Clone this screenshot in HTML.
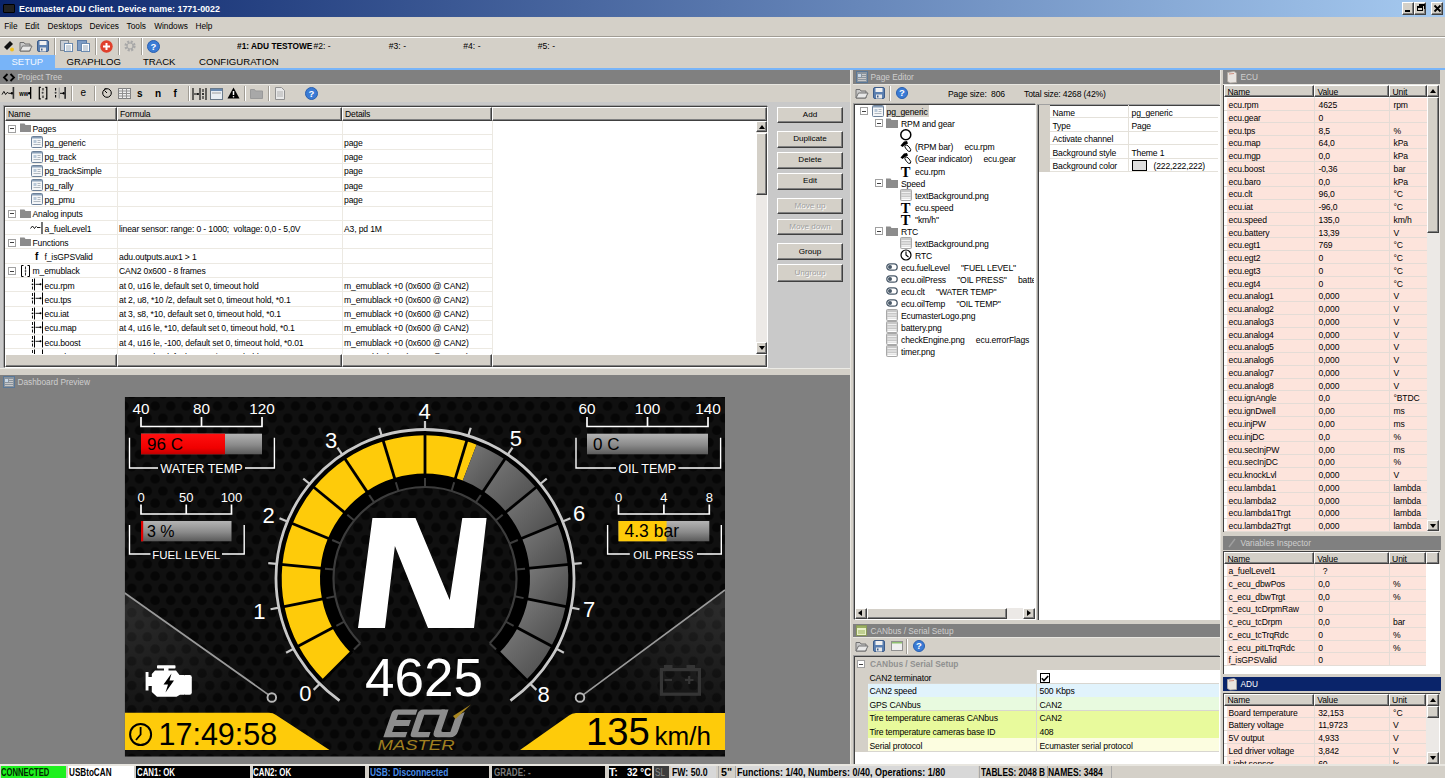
<!DOCTYPE html><html><head><meta charset="utf-8"><style>
html,body{margin:0;padding:0}body{width:1445px;height:778px;position:relative;overflow:hidden;background:#d4d0c8;font-family:"Liberation Sans",sans-serif;font-size:8.2px;color:#000}div{box-sizing:border-box}svg{position:absolute;overflow:visible}
</style></head><body>
<div style="position:absolute;left:0px;top:0px;width:1445px;height:17px;background:linear-gradient(to right,#0a246a 0%,#a6caf0 100%)"></div>
<div style="position:absolute;left:3px;top:4px;width:12px;height:9px;background:#222;border:1px solid #000;border-radius:1px"></div>
<div style="position:absolute;left:19px;top:3.0px;height:12px;line-height:12px;font-size:8.9px;color:#fff;font-weight:bold;white-space:pre;">Ecumaster ADU Client. Device name: 1771-0022</div>
<div style="position:absolute;left:1402px;top:2px;width:12px;height:13px;box-sizing:border-box;background:#d4d0c8;border-top:1px solid #fff;border-left:1px solid #fff;border-right:1px solid #404040;border-bottom:1px solid #404040;box-shadow:inset -1px -1px 0 #808080;"></div>
<div style="position:absolute;left:1414px;top:2px;width:12px;height:13px;box-sizing:border-box;background:#d4d0c8;border-top:1px solid #fff;border-left:1px solid #fff;border-right:1px solid #404040;border-bottom:1px solid #404040;box-shadow:inset -1px -1px 0 #808080;"></div>
<div style="position:absolute;left:1431px;top:2px;width:12px;height:13px;box-sizing:border-box;background:#d4d0c8;border-top:1px solid #fff;border-left:1px solid #fff;border-right:1px solid #404040;border-bottom:1px solid #404040;box-shadow:inset -1px -1px 0 #808080;"></div>
<div style="position:absolute;left:1405px;top:10px;width:5px;height:2px;background:#000"></div>
<div style="position:absolute;left:1417px;top:6px;width:6px;height:5px;border:1px solid #000;border-top-width:2px"></div>
<div style="position:absolute;left:1419px;top:4px;width:6px;height:5px;border:1px solid #000;border-top-width:2px;border-left:none;border-bottom:none"></div>
<svg style="left:1434px;top:5px" width="7" height="7"><path d="M0.5 0.5L6.5 6.5M6.5 0.5L0.5 6.5" stroke="#000" stroke-width="1.8"/></svg>
<div style="position:absolute;left:4.2px;top:20.3px;height:12px;line-height:12px;font-size:8.3px;color:#000;font-weight:normal;white-space:pre;">File</div>
<div style="position:absolute;left:24.9px;top:20.3px;height:12px;line-height:12px;font-size:8.3px;color:#000;font-weight:normal;white-space:pre;">Edit</div>
<div style="position:absolute;left:47.6px;top:20.3px;height:12px;line-height:12px;font-size:8.3px;color:#000;font-weight:normal;white-space:pre;">Desktops</div>
<div style="position:absolute;left:89.4px;top:20.3px;height:12px;line-height:12px;font-size:8.3px;color:#000;font-weight:normal;white-space:pre;">Devices</div>
<div style="position:absolute;left:126.5px;top:20.3px;height:12px;line-height:12px;font-size:8.3px;color:#000;font-weight:normal;white-space:pre;">Tools</div>
<div style="position:absolute;left:154.2px;top:20.3px;height:12px;line-height:12px;font-size:8.3px;color:#000;font-weight:normal;white-space:pre;">Windows</div>
<div style="position:absolute;left:195.4px;top:20.3px;height:12px;line-height:12px;font-size:8.3px;color:#000;font-weight:normal;white-space:pre;">Help</div>
<div style="position:absolute;left:0px;top:36px;width:1445px;height:1px;background:#a09c94"></div>
<div style="position:absolute;left:0px;top:37px;width:1445px;height:1px;background:#fff"></div>
<svg style="left:3px;top:40px" width="12" height="12"><path d="M1 7l6-6 3 3-6 6z" fill="#111"/><circle cx="9" cy="9.5" r="2" fill="#f0c020"/></svg>
<svg style="left:19px;top:40px" width="13" height="12"><path d="M1 2.5h4l1 1.5h5v7H1z" fill="#c8c8c8" stroke="#707070" stroke-width="1"/><path d="M1 11l2.5-5h9.5l-2.5 5z" fill="#e8e8e8" stroke="#707070" stroke-width="1"/></svg>
<svg style="left:37px;top:40px" width="12" height="12"><rect x="0.5" y="0.5" width="11" height="11" rx="1.5" fill="#5a7fb0" stroke="#3d5c8a"/><rect x="2.5" y="1" width="7" height="4" fill="#f0f0f0"/><rect x="3" y="7.5" width="6" height="4" fill="#e8e8e8"/><rect x="4" y="8.5" width="1.5" height="2" fill="#3d5c8a"/></svg>
<div style="position:absolute;left:54px;top:38px;width:2px;height:17px;border-left:1px solid #a09c94;border-right:1px solid #fff"></div>
<svg style="left:60px;top:40px" width="13" height="12"><rect x="0.5" y="0.5" width="8" height="10" fill="#c8cdd4" stroke="#808890"/><rect x="4.5" y="3.5" width="8" height="8" fill="#fff" stroke="#6a8ab0"/><path d="M6 6h5M6 8h5M6 10h5" stroke="#9ab"/></svg>
<svg style="left:77px;top:40px" width="13" height="12"><rect x="0.5" y="0.5" width="9" height="10" fill="#7d9cc4" stroke="#5a7aa4"/><rect x="4.5" y="3.5" width="8" height="8" fill="#fff" stroke="#6a8ab0"/><path d="M6 6h5M6 8h5M6 10h5" stroke="#9ab"/></svg>
<div style="position:absolute;left:95px;top:38px;width:2px;height:17px;border-left:1px solid #a09c94;border-right:1px solid #fff"></div>
<svg style="left:100px;top:40px" width="13" height="13"><circle cx="6.5" cy="6.5" r="6.2" fill="#e0402c"/><path d="M6.5 3v7M3 6.5h7" stroke="#fff" stroke-width="2"/></svg>
<div style="position:absolute;left:118px;top:38px;width:2px;height:17px;border-left:1px solid #a09c94;border-right:1px solid #fff"></div>
<svg style="left:124px;top:40px" width="12" height="12"><circle cx="6" cy="6" r="4.3" fill="none" stroke="#a8a8a8" stroke-width="2.6" stroke-dasharray="2 1.4"/><circle cx="6" cy="6" r="3" fill="none" stroke="#a8a8a8" stroke-width="1.2"/></svg>
<div style="position:absolute;left:141px;top:38px;width:2px;height:17px;border-left:1px solid #a09c94;border-right:1px solid #fff"></div>
<svg style="left:147px;top:40px" width="13" height="13"><circle cx="6.5" cy="6.5" r="6.0" fill="#3a7bd5" stroke="#2a5fae"/><text x="6.5" y="9.8" font-family="Liberation Sans" font-weight="bold" font-size="9.5" fill="#fff" text-anchor="middle">?</text></svg>
<div style="position:absolute;left:237.38px;top:39.10px;height:14px;line-height:14px;font-size:8.78px;color:#000;font-weight:bold;white-space:pre;transform:scaleX(0.950);transform-origin:0 50%;">#1: ADU TESTOWE</div>
<div style="position:absolute;left:313.4px;top:39.5px;height:12px;line-height:12px;font-size:8.6px;color:#000;font-weight:normal;white-space:pre;">#2: -</div>
<div style="position:absolute;left:388.8px;top:39.5px;height:12px;line-height:12px;font-size:8.6px;color:#000;font-weight:normal;white-space:pre;">#3: -</div>
<div style="position:absolute;left:463.3px;top:39.5px;height:12px;line-height:12px;font-size:8.6px;color:#000;font-weight:normal;white-space:pre;">#4: -</div>
<div style="position:absolute;left:537.8px;top:39.5px;height:12px;line-height:12px;font-size:8.6px;color:#000;font-weight:normal;white-space:pre;">#5: -</div>
<div style="position:absolute;left:0px;top:55px;width:55px;height:13px;background:#78b4f8"></div>
<div style="position:absolute;left:11.5px;top:55.7px;height:12px;line-height:12px;font-size:9.5px;color:#f4f8ff;font-weight:normal;white-space:pre;">SETUP</div>
<div style="position:absolute;left:66.5px;top:55.7px;height:12px;line-height:12px;font-size:9.6px;color:#000;font-weight:normal;white-space:pre;">GRAPHLOG</div>
<div style="position:absolute;left:143px;top:55.7px;height:12px;line-height:12px;font-size:9.6px;color:#000;font-weight:normal;white-space:pre;">TRACK</div>
<div style="position:absolute;left:199px;top:55.7px;height:12px;line-height:12px;font-size:9.6px;color:#000;font-weight:normal;white-space:pre;">CONFIGURATION</div>
<div style="position:absolute;left:0px;top:68px;width:1445px;height:2px;background:#78b4f8"></div>
<div style="position:absolute;left:0px;top:70px;width:850px;height:14px;background:#808080"></div><svg style="left:3px;top:73px" width="12" height="9"><path d="M4.5 1L1 4.5L4.5 8M7.5 1L11 4.5L7.5 8" fill="none" stroke="#000" stroke-width="1.8"/></svg><div style="position:absolute;left:17.5px;top:71.3px;height:12px;line-height:12px;font-size:8.3px;color:#cfcfcf;font-weight:normal;white-space:pre;">Project Tree</div>
<div style="position:absolute;left:0px;top:84px;width:850px;height:1px;background:#e8e6e0"></div>
<svg style="left:0;top:84px" width="70" height="20" viewBox="0 84 70 20"><path d="M2 94.6L3.9 91.4L5.6 94.5L7.2 92.4L8.8 93.3H11.5" fill="none" stroke="#000" stroke-width="0.9"/><circle cx="12" cy="93.3" r="1.2" fill="#000"/><rect x="12.6" y="87" width="1.6" height="11.8" fill="#333"/><text x="19.3" y="95.6" font-family="Liberation Sans" font-weight="bold" font-size="7.5" fill="#000" textLength="8.8" lengthAdjust="spacingAndGlyphs">ww</text><circle cx="29.3" cy="93.3" r="1.2" fill="#000"/><rect x="30" y="87" width="1.3" height="11.8" fill="#000"/><path d="M40.8 87.3H39.3V98.8H40.8M45.3 87.3H46.8V98.8H45.3" fill="none" stroke="#000" stroke-width="1.2"/><path d="M43 88V90.5M43 95.5V98" stroke="#000" stroke-width="1"/><circle cx="42.6" cy="92.8" r="1" fill="#404040"/><path d="M55.6 88V90.5M55.6 95V97.5" stroke="#000" stroke-width="1.1"/><circle cx="55.6" cy="92.8" r="1" fill="#404040"/><rect x="58.7" y="87.5" width="1" height="11" fill="#909090"/><path d="M60 93.3H63.5" stroke="#000" stroke-width="1"/><circle cx="63.8" cy="93.3" r="1.2" fill="#000"/><rect x="64.3" y="87" width="1.7" height="11.8" fill="#333"/></svg><div style="position:absolute;left:71px;top:86px;width:2px;height:15px;border-left:1px solid #a09c94;border-right:1px solid #fff"></div><div style="position:absolute;left:80.5px;top:87.0px;height:12px;line-height:12px;font-size:10px;color:#000;font-weight:normal;white-space:pre;">e</div><div style="position:absolute;left:94px;top:86px;width:2px;height:15px;border-left:1px solid #a09c94;border-right:1px solid #fff"></div><svg style="left:102px;top:88px" width="10" height="10"><circle cx="5" cy="5" r="4.3" fill="none" stroke="#000" stroke-width="1"/><path d="M5 5L2.5 2.5M2.5 0.8L4.5 0.8" stroke="#000" stroke-width="1"/></svg><svg style="left:118px;top:88px" width="13" height="11"><rect x="0.5" y="0.5" width="12" height="10" fill="#f0f0f0" stroke="#808080"/><path d="M0.5 3h12M0.5 5.5h12M0.5 8h12M4.5 0.5v10M8.5 0.5v10" stroke="#909090"/></svg><div style="position:absolute;left:137px;top:88.0px;height:12px;line-height:12px;font-size:10px;color:#000;font-weight:bold;white-space:pre;">s</div><div style="position:absolute;left:155px;top:88.0px;height:12px;line-height:12px;font-size:10px;color:#000;font-weight:bold;white-space:pre;">n</div><div style="position:absolute;left:173.5px;top:87.5px;height:12px;line-height:12px;font-size:10px;color:#000;font-weight:bold;white-space:pre;">f</div><div style="position:absolute;left:188px;top:86px;width:2px;height:15px;border-left:1px solid #a09c94;border-right:1px solid #fff"></div><svg style="left:192px;top:88px" width="16" height="12"><path d="M1 0v12" stroke="#000" stroke-width="1.1"/><path d="M2 6h4" stroke="#000"/><circle cx="6" cy="6" r="1" fill="#000"/><path d="M8 0v12" stroke="#000" stroke-width="1.1"/><path d="M11 1v3M11 8v3" stroke="#000"/><circle cx="11" cy="6" r="1" fill="#000"/><path d="M14 0v12" stroke="#000" stroke-width="1.1"/></svg><svg style="left:210px;top:88px" width="13" height="12"><rect x="0.5" y="0.5" width="12" height="11" fill="#e8eef4" stroke="#6a7a8a"/><rect x="1" y="1" width="11" height="2" fill="#6a8ab0"/><path d="M2 5h9" stroke="#a0a0a0"/></svg><svg style="left:227px;top:87px" width="13" height="12"><path d="M6.5 0.5L12.5 11.5H0.5z" fill="#000"/><path d="M6.5 4v4" stroke="#fff" stroke-width="1.5"/><circle cx="6.5" cy="9.7" r="0.8" fill="#fff"/></svg><div style="position:absolute;left:244px;top:86px;width:2px;height:15px;border-left:1px solid #a09c94;border-right:1px solid #fff"></div><svg style="left:250px;top:88px" width="13" height="11"><path d="M0.5 1.5h4l1 1.5h7v7.5h-12z" fill="#a8a8a8" stroke="#999"/></svg><div style="position:absolute;left:268px;top:86px;width:2px;height:15px;border-left:1px solid #a09c94;border-right:1px solid #fff"></div><svg style="left:275px;top:87px" width="10" height="13"><path d="M0.5 0.5h6l3 3v9h-9z" fill="#e8e8e8" stroke="#909090"/><path d="M2 5h6M2 7h6M2 9h6" stroke="#b0b0b0"/></svg><svg style="left:305px;top:87px" width="13" height="13"><circle cx="6.5" cy="6.5" r="6.0" fill="#3a7bd5" stroke="#2a5fae"/><text x="6.5" y="9.8" font-family="Liberation Sans" font-weight="bold" font-size="9.5" fill="#fff" text-anchor="middle">?</text></svg>
<div style="position:absolute;left:0px;top:102px;width:850px;height:273px;background:#c9c9c9"></div>
<div style="position:absolute;left:4px;top:106px;width:764px;height:262px;background:#fff;border-top:1px solid #404040;border-left:1px solid #404040;border-right:1px solid #fff;border-bottom:1px solid #fff;box-shadow:-1px -1px 0 #a0a0a0"></div>
<div style="position:absolute;left:5px;top:107px;width:112px;height:14px;box-sizing:border-box;background:#d4d0c8;border-top:1px solid #fff;border-left:1px solid #fff;border-right:1px solid #404040;border-bottom:1px solid #404040;box-shadow:inset -1px -1px 0 #808080;"></div>
<div style="position:absolute;left:117px;top:107px;width:225px;height:14px;box-sizing:border-box;background:#d4d0c8;border-top:1px solid #fff;border-left:1px solid #fff;border-right:1px solid #404040;border-bottom:1px solid #404040;box-shadow:inset -1px -1px 0 #808080;"></div>
<div style="position:absolute;left:342px;top:107px;width:150px;height:14px;box-sizing:border-box;background:#d4d0c8;border-top:1px solid #fff;border-left:1px solid #fff;border-right:1px solid #404040;border-bottom:1px solid #404040;box-shadow:inset -1px -1px 0 #808080;"></div>
<div style="position:absolute;left:492px;top:107px;width:275px;height:14px;box-sizing:border-box;background:#d4d0c8;border-top:1px solid #fff;border-left:1px solid #fff;border-right:1px solid #404040;border-bottom:1px solid #404040;box-shadow:inset -1px -1px 0 #808080;"></div>
<div style="position:absolute;left:8px;top:108.0px;height:12px;line-height:12px;font-size:8.6px;color:#000;font-weight:normal;white-space:pre;letter-spacing:-0.15px;">Name</div>
<div style="position:absolute;left:120px;top:108.0px;height:12px;line-height:12px;font-size:8.6px;color:#000;font-weight:normal;white-space:pre;letter-spacing:-0.15px;">Formula</div>
<div style="position:absolute;left:345px;top:108.0px;height:12px;line-height:12px;font-size:8.6px;color:#000;font-weight:normal;white-space:pre;letter-spacing:-0.15px;">Details</div>
<div style="position:absolute;left:5px;top:354px;width:112px;height:13px;box-sizing:border-box;background:#d4d0c8;border-top:1px solid #fff;border-left:1px solid #fff;border-right:1px solid #404040;border-bottom:1px solid #404040;box-shadow:inset -1px -1px 0 #808080;"></div>
<div style="position:absolute;left:117px;top:354px;width:225px;height:13px;box-sizing:border-box;background:#d4d0c8;border-top:1px solid #fff;border-left:1px solid #fff;border-right:1px solid #404040;border-bottom:1px solid #404040;box-shadow:inset -1px -1px 0 #808080;"></div>
<div style="position:absolute;left:342px;top:354px;width:150px;height:13px;box-sizing:border-box;background:#d4d0c8;border-top:1px solid #fff;border-left:1px solid #fff;border-right:1px solid #404040;border-bottom:1px solid #404040;box-shadow:inset -1px -1px 0 #808080;"></div>
<div style="position:absolute;left:492px;top:354px;width:275px;height:13px;box-sizing:border-box;background:#d4d0c8;border-top:1px solid #fff;border-left:1px solid #fff;border-right:1px solid #404040;border-bottom:1px solid #404040;box-shadow:inset -1px -1px 0 #808080;"></div>
<div style="position:absolute;left:0;top:0;width:1445px;height:354px;overflow:hidden;clip-path:inset(121px 0 0 0)"><div style="position:absolute;left:5px;top:134.27px;width:487px;height:1px;background:#ece9e2"></div><div style="position:absolute;left:8px;top:124.63499999999999px;width:8px;height:8px;border:1px solid #a0a0a0;background:#fff"></div><div style="position:absolute;left:10px;top:127.835px;width:4px;height:1px;background:#404040"></div><svg style="left:20px;top:123.13499999999999px" width="11" height="9"><path d="M0 0.5h4.5l1 1.5H11v7H0z" fill="#8c8c8c"/></svg><div style="position:absolute;left:32.5px;top:122.63499999999999px;height:12px;line-height:12px;font-size:8.6px;color:#000;font-weight:normal;white-space:pre;letter-spacing:-0.15px;">Pages</div><div style="position:absolute;left:5px;top:148.54000000000002px;width:487px;height:1px;background:#ece9e2"></div><svg style="left:31px;top:136.405px" width="12" height="12"><rect x="0.5" y="0.5" width="11" height="11" rx="1" fill="#f4f6f8" stroke="#6c8098"/><rect x="1" y="1" width="10" height="1.5" fill="#8aa0b8"/><rect x="2.5" y="4" width="3" height="3" fill="#b8c8d8"/><path d="M6.5 4.5h3M6.5 6.5h3M2.5 8.5h7" stroke="#b0b8c0"/></svg><div style="position:absolute;left:44.5px;top:136.905px;height:12px;line-height:12px;font-size:8.6px;color:#000;font-weight:normal;white-space:pre;letter-spacing:-0.15px;">pg_generic</div><div style="position:absolute;left:344px;top:136.905px;height:12px;line-height:12px;font-size:8.6px;color:#000;font-weight:normal;white-space:pre;letter-spacing:-0.15px;">page</div><div style="position:absolute;left:5px;top:162.81px;width:487px;height:1px;background:#ece9e2"></div><svg style="left:31px;top:150.67499999999998px" width="12" height="12"><rect x="0.5" y="0.5" width="11" height="11" rx="1" fill="#f4f6f8" stroke="#6c8098"/><rect x="1" y="1" width="10" height="1.5" fill="#8aa0b8"/><rect x="2.5" y="4" width="3" height="3" fill="#b8c8d8"/><path d="M6.5 4.5h3M6.5 6.5h3M2.5 8.5h7" stroke="#b0b8c0"/></svg><div style="position:absolute;left:44.5px;top:151.17499999999998px;height:12px;line-height:12px;font-size:8.6px;color:#000;font-weight:normal;white-space:pre;letter-spacing:-0.15px;">pg_track</div><div style="position:absolute;left:344px;top:151.17499999999998px;height:12px;line-height:12px;font-size:8.6px;color:#000;font-weight:normal;white-space:pre;letter-spacing:-0.15px;">page</div><div style="position:absolute;left:5px;top:177.08px;width:487px;height:1px;background:#ece9e2"></div><svg style="left:31px;top:164.945px" width="12" height="12"><rect x="0.5" y="0.5" width="11" height="11" rx="1" fill="#f4f6f8" stroke="#6c8098"/><rect x="1" y="1" width="10" height="1.5" fill="#8aa0b8"/><rect x="2.5" y="4" width="3" height="3" fill="#b8c8d8"/><path d="M6.5 4.5h3M6.5 6.5h3M2.5 8.5h7" stroke="#b0b8c0"/></svg><div style="position:absolute;left:44.5px;top:165.445px;height:12px;line-height:12px;font-size:8.6px;color:#000;font-weight:normal;white-space:pre;letter-spacing:-0.15px;">pg_trackSimple</div><div style="position:absolute;left:344px;top:165.445px;height:12px;line-height:12px;font-size:8.6px;color:#000;font-weight:normal;white-space:pre;letter-spacing:-0.15px;">page</div><div style="position:absolute;left:5px;top:191.35px;width:487px;height:1px;background:#ece9e2"></div><svg style="left:31px;top:179.21499999999997px" width="12" height="12"><rect x="0.5" y="0.5" width="11" height="11" rx="1" fill="#f4f6f8" stroke="#6c8098"/><rect x="1" y="1" width="10" height="1.5" fill="#8aa0b8"/><rect x="2.5" y="4" width="3" height="3" fill="#b8c8d8"/><path d="M6.5 4.5h3M6.5 6.5h3M2.5 8.5h7" stroke="#b0b8c0"/></svg><div style="position:absolute;left:44.5px;top:179.71499999999997px;height:12px;line-height:12px;font-size:8.6px;color:#000;font-weight:normal;white-space:pre;letter-spacing:-0.15px;">pg_rally</div><div style="position:absolute;left:344px;top:179.71499999999997px;height:12px;line-height:12px;font-size:8.6px;color:#000;font-weight:normal;white-space:pre;letter-spacing:-0.15px;">page</div><div style="position:absolute;left:5px;top:205.62px;width:487px;height:1px;background:#ece9e2"></div><svg style="left:31px;top:193.48499999999999px" width="12" height="12"><rect x="0.5" y="0.5" width="11" height="11" rx="1" fill="#f4f6f8" stroke="#6c8098"/><rect x="1" y="1" width="10" height="1.5" fill="#8aa0b8"/><rect x="2.5" y="4" width="3" height="3" fill="#b8c8d8"/><path d="M6.5 4.5h3M6.5 6.5h3M2.5 8.5h7" stroke="#b0b8c0"/></svg><div style="position:absolute;left:44.5px;top:193.98499999999999px;height:12px;line-height:12px;font-size:8.6px;color:#000;font-weight:normal;white-space:pre;letter-spacing:-0.15px;">pg_pmu</div><div style="position:absolute;left:344px;top:193.98499999999999px;height:12px;line-height:12px;font-size:8.6px;color:#000;font-weight:normal;white-space:pre;letter-spacing:-0.15px;">page</div><div style="position:absolute;left:5px;top:219.89000000000001px;width:487px;height:1px;background:#ece9e2"></div><div style="position:absolute;left:8px;top:210.255px;width:8px;height:8px;border:1px solid #a0a0a0;background:#fff"></div><div style="position:absolute;left:10px;top:213.45499999999998px;width:4px;height:1px;background:#404040"></div><svg style="left:20px;top:208.755px" width="11" height="9"><path d="M0 0.5h4.5l1 1.5H11v7H0z" fill="#8c8c8c"/></svg><div style="position:absolute;left:32.5px;top:208.255px;height:12px;line-height:12px;font-size:8.6px;color:#000;font-weight:normal;white-space:pre;letter-spacing:-0.15px;">Analog inputs</div><div style="position:absolute;left:5px;top:234.16px;width:487px;height:1px;background:#ece9e2"></div><svg style="left:30px;top:222.02499999999998px" width="13" height="12"><path d="M0.5 6.5l2-2.5 2 2.5 2-2.5" fill="none" stroke="#000" stroke-width="0.9"/><path d="M7 5.5h3.5" stroke="#000" stroke-width="0.9"/><path d="M12 0v12" stroke="#000" stroke-width="1.1"/></svg><div style="position:absolute;left:44.5px;top:222.52499999999998px;height:12px;line-height:12px;font-size:8.6px;color:#000;font-weight:normal;white-space:pre;letter-spacing:-0.15px;">a_fuelLevel1</div><div style="position:absolute;left:119px;top:222.52499999999998px;height:12px;line-height:12px;font-size:8.6px;color:#000;font-weight:normal;white-space:pre;letter-spacing:-0.15px;">linear sensor: range: 0 - 1000;  voltage: 0,0 - 5,0V</div><div style="position:absolute;left:344px;top:222.52499999999998px;height:12px;line-height:12px;font-size:8.6px;color:#000;font-weight:normal;white-space:pre;letter-spacing:-0.15px;">A3, pd 1M</div><div style="position:absolute;left:5px;top:248.43px;width:487px;height:1px;background:#ece9e2"></div><div style="position:absolute;left:8px;top:238.795px;width:8px;height:8px;border:1px solid #a0a0a0;background:#fff"></div><div style="position:absolute;left:10px;top:241.99499999999998px;width:4px;height:1px;background:#404040"></div><svg style="left:20px;top:237.295px" width="11" height="9"><path d="M0 0.5h4.5l1 1.5H11v7H0z" fill="#8c8c8c"/></svg><div style="position:absolute;left:32.5px;top:236.795px;height:12px;line-height:12px;font-size:8.6px;color:#000;font-weight:normal;white-space:pre;letter-spacing:-0.15px;">Functions</div><div style="position:absolute;left:5px;top:262.7px;width:487px;height:1px;background:#ece9e2"></div><div style="position:absolute;left:35px;top:250.565px;height:12px;line-height:12px;font-size:10px;color:#000;font-weight:bold;white-space:pre;">f</div><div style="position:absolute;left:44.5px;top:251.065px;height:12px;line-height:12px;font-size:8.6px;color:#000;font-weight:normal;white-space:pre;letter-spacing:-0.15px;">f_isGPSValid</div><div style="position:absolute;left:119px;top:251.065px;height:12px;line-height:12px;font-size:8.6px;color:#000;font-weight:normal;white-space:pre;letter-spacing:-0.15px;">adu.outputs.aux1 &gt; 1</div><div style="position:absolute;left:5px;top:276.96999999999997px;width:487px;height:1px;background:#ece9e2"></div><div style="position:absolute;left:8px;top:267.335px;width:8px;height:8px;border:1px solid #a0a0a0;background:#fff"></div><div style="position:absolute;left:10px;top:270.53499999999997px;width:4px;height:1px;background:#404040"></div><svg style="left:21px;top:264.835px" width="9" height="12"><path d="M2.5 0.5h-2v11h2M6.5 0.5h2v11h-2" fill="none" stroke="#000" stroke-width="1"/><path d="M4.5 1.5v3M4.5 7.5v3" stroke="#000" stroke-width="0.8"/><circle cx="4.5" cy="6" r="0.8" fill="#000"/></svg><div style="position:absolute;left:32.5px;top:265.335px;height:12px;line-height:12px;font-size:8.6px;color:#000;font-weight:normal;white-space:pre;letter-spacing:-0.15px;">m_emublack</div><div style="position:absolute;left:119px;top:265.335px;height:12px;line-height:12px;font-size:8.6px;color:#000;font-weight:normal;white-space:pre;letter-spacing:-0.15px;">CAN2 0x600 - 8 frames</div><div style="position:absolute;left:5px;top:291.24px;width:487px;height:1px;background:#ece9e2"></div><svg style="left:31px;top:278.105px" width="12" height="13"><path d="M1.5 1v3M1.5 8.5v3" stroke="#000" stroke-width="0.9"/><circle cx="1.5" cy="6.3" r="0.9" fill="#000"/><path d="M3.5 0.5v12M11.5 0.5v12" stroke="#000" stroke-width="1"/><path d="M4.5 6.3h5" stroke="#000" stroke-width="0.9"/><circle cx="9.5" cy="6.3" r="1" fill="#000"/></svg><div style="position:absolute;left:44.5px;top:279.605px;height:12px;line-height:12px;font-size:8.6px;color:#000;font-weight:normal;white-space:pre;letter-spacing:-0.15px;">ecu.rpm</div><div style="position:absolute;left:119px;top:279.605px;height:12px;line-height:12px;font-size:8.6px;color:#000;font-weight:normal;white-space:pre;letter-spacing:-0.15px;">at 0, u16 le, default set 0, timeout hold</div><div style="position:absolute;left:344px;top:279.605px;height:12px;line-height:12px;font-size:8.6px;color:#000;font-weight:normal;white-space:pre;letter-spacing:-0.15px;">m_emublack +0 (0x600 @ CAN2)</div><div style="position:absolute;left:5px;top:305.51px;width:487px;height:1px;background:#ece9e2"></div><svg style="left:31px;top:292.375px" width="12" height="13"><path d="M1.5 1v3M1.5 8.5v3" stroke="#000" stroke-width="0.9"/><circle cx="1.5" cy="6.3" r="0.9" fill="#000"/><path d="M3.5 0.5v12M11.5 0.5v12" stroke="#000" stroke-width="1"/><path d="M4.5 6.3h5" stroke="#000" stroke-width="0.9"/><circle cx="9.5" cy="6.3" r="1" fill="#000"/></svg><div style="position:absolute;left:44.5px;top:293.875px;height:12px;line-height:12px;font-size:8.6px;color:#000;font-weight:normal;white-space:pre;letter-spacing:-0.15px;">ecu.tps</div><div style="position:absolute;left:119px;top:293.875px;height:12px;line-height:12px;font-size:8.6px;color:#000;font-weight:normal;white-space:pre;letter-spacing:-0.15px;">at 2, u8, *10 /2, default set 0, timeout hold, *0.1</div><div style="position:absolute;left:344px;top:293.875px;height:12px;line-height:12px;font-size:8.6px;color:#000;font-weight:normal;white-space:pre;letter-spacing:-0.15px;">m_emublack +0 (0x600 @ CAN2)</div><div style="position:absolute;left:5px;top:319.78px;width:487px;height:1px;background:#ece9e2"></div><svg style="left:31px;top:306.645px" width="12" height="13"><path d="M1.5 1v3M1.5 8.5v3" stroke="#000" stroke-width="0.9"/><circle cx="1.5" cy="6.3" r="0.9" fill="#000"/><path d="M3.5 0.5v12M11.5 0.5v12" stroke="#000" stroke-width="1"/><path d="M4.5 6.3h5" stroke="#000" stroke-width="0.9"/><circle cx="9.5" cy="6.3" r="1" fill="#000"/></svg><div style="position:absolute;left:44.5px;top:308.145px;height:12px;line-height:12px;font-size:8.6px;color:#000;font-weight:normal;white-space:pre;letter-spacing:-0.15px;">ecu.iat</div><div style="position:absolute;left:119px;top:308.145px;height:12px;line-height:12px;font-size:8.6px;color:#000;font-weight:normal;white-space:pre;letter-spacing:-0.15px;">at 3, s8, *10, default set 0, timeout hold, *0.1</div><div style="position:absolute;left:344px;top:308.145px;height:12px;line-height:12px;font-size:8.6px;color:#000;font-weight:normal;white-space:pre;letter-spacing:-0.15px;">m_emublack +0 (0x600 @ CAN2)</div><div style="position:absolute;left:5px;top:334.04999999999995px;width:487px;height:1px;background:#ece9e2"></div><svg style="left:31px;top:320.91499999999996px" width="12" height="13"><path d="M1.5 1v3M1.5 8.5v3" stroke="#000" stroke-width="0.9"/><circle cx="1.5" cy="6.3" r="0.9" fill="#000"/><path d="M3.5 0.5v12M11.5 0.5v12" stroke="#000" stroke-width="1"/><path d="M4.5 6.3h5" stroke="#000" stroke-width="0.9"/><circle cx="9.5" cy="6.3" r="1" fill="#000"/></svg><div style="position:absolute;left:44.5px;top:322.41499999999996px;height:12px;line-height:12px;font-size:8.6px;color:#000;font-weight:normal;white-space:pre;letter-spacing:-0.15px;">ecu.map</div><div style="position:absolute;left:119px;top:322.41499999999996px;height:12px;line-height:12px;font-size:8.6px;color:#000;font-weight:normal;white-space:pre;letter-spacing:-0.15px;">at 4, u16 le, *10, default set 0, timeout hold, *0.1</div><div style="position:absolute;left:344px;top:322.41499999999996px;height:12px;line-height:12px;font-size:8.6px;color:#000;font-weight:normal;white-space:pre;letter-spacing:-0.15px;">m_emublack +0 (0x600 @ CAN2)</div><div style="position:absolute;left:5px;top:348.31999999999994px;width:487px;height:1px;background:#ece9e2"></div><svg style="left:31px;top:335.18499999999995px" width="12" height="13"><path d="M1.5 1v3M1.5 8.5v3" stroke="#000" stroke-width="0.9"/><circle cx="1.5" cy="6.3" r="0.9" fill="#000"/><path d="M3.5 0.5v12M11.5 0.5v12" stroke="#000" stroke-width="1"/><path d="M4.5 6.3h5" stroke="#000" stroke-width="0.9"/><circle cx="9.5" cy="6.3" r="1" fill="#000"/></svg><div style="position:absolute;left:44.5px;top:336.68499999999995px;height:12px;line-height:12px;font-size:8.6px;color:#000;font-weight:normal;white-space:pre;letter-spacing:-0.15px;">ecu.boost</div><div style="position:absolute;left:119px;top:336.68499999999995px;height:12px;line-height:12px;font-size:8.6px;color:#000;font-weight:normal;white-space:pre;letter-spacing:-0.15px;">at 4, u16 le, -100, default set 0, timeout hold, *0.01</div><div style="position:absolute;left:344px;top:336.68499999999995px;height:12px;line-height:12px;font-size:8.6px;color:#000;font-weight:normal;white-space:pre;letter-spacing:-0.15px;">m_emublack +0 (0x600 @ CAN2)</div><div style="position:absolute;left:5px;top:362.59px;width:487px;height:1px;background:#ece9e2"></div><svg style="left:31px;top:349.455px" width="12" height="13"><path d="M1.5 1v3M1.5 8.5v3" stroke="#000" stroke-width="0.9"/><circle cx="1.5" cy="6.3" r="0.9" fill="#000"/><path d="M3.5 0.5v12M11.5 0.5v12" stroke="#000" stroke-width="1"/><path d="M4.5 6.3h5" stroke="#000" stroke-width="0.9"/><circle cx="9.5" cy="6.3" r="1" fill="#000"/></svg><div style="position:absolute;left:44.5px;top:350.955px;height:12px;line-height:12px;font-size:8.6px;color:#000;font-weight:normal;white-space:pre;letter-spacing:-0.15px;">ecu.clt</div><div style="position:absolute;left:119px;top:350.955px;height:12px;line-height:12px;font-size:8.6px;color:#000;font-weight:normal;white-space:pre;letter-spacing:-0.15px;">at 6, u16 le, default set 0, timeout hold</div><div style="position:absolute;left:344px;top:350.955px;height:12px;line-height:12px;font-size:8.6px;color:#000;font-weight:normal;white-space:pre;letter-spacing:-0.15px;">m_emublack +0 (0x600 @ CAN2)</div></div>
<div style="position:absolute;left:117px;top:121px;width:1px;height:233px;background:#ece9e2"></div>
<div style="position:absolute;left:342px;top:121px;width:1px;height:233px;background:#ece9e2"></div>
<div style="position:absolute;left:492px;top:121px;width:1px;height:233px;background:#ece9e2"></div>
<div style="position:absolute;left:756px;top:121px;width:11px;height:233px;background:#ece9e6"></div>
<div style="position:absolute;left:756px;top:121px;width:11px;height:11px;box-sizing:border-box;background:#d4d0c8;border-top:1px solid #fff;border-left:1px solid #fff;border-right:1px solid #404040;border-bottom:1px solid #404040;box-shadow:inset -1px -1px 0 #808080;"></div>
<svg style="left:758.5px;top:124.5px" width="6" height="4"><path d="M3 0L6 4H0z" fill="#000"/></svg>
<div style="position:absolute;left:756px;top:133px;width:11px;height:62px;box-sizing:border-box;background:#d4d0c8;border-top:1px solid #fff;border-left:1px solid #fff;border-right:1px solid #404040;border-bottom:1px solid #404040;box-shadow:inset -1px -1px 0 #808080;"></div>
<div style="position:absolute;left:756px;top:342px;width:11px;height:12px;box-sizing:border-box;background:#d4d0c8;border-top:1px solid #fff;border-left:1px solid #fff;border-right:1px solid #404040;border-bottom:1px solid #404040;box-shadow:inset -1px -1px 0 #808080;"></div>
<svg style="left:758.5px;top:346px" width="6" height="4"><path d="M0 0H6L3 4z" fill="#000"/></svg>
<div style="position:absolute;left:777px;top:106.7px;width:66px;height:16.200000000000003px;box-sizing:border-box;background:#d4d0c8;border-top:1px solid #fff;border-left:1px solid #fff;border-right:1px solid #404040;border-bottom:1px solid #404040;box-shadow:inset -1px -1px 0 #808080;"></div>
<div style="position:absolute;left:777px;top:108.55000000000001px;width:66px;height:12px;line-height:12px;text-align:center;font-size:8.1px;color:#000;">Add</div>
<div style="position:absolute;left:777px;top:131px;width:66px;height:16.900000000000006px;box-sizing:border-box;background:#d4d0c8;border-top:1px solid #fff;border-left:1px solid #fff;border-right:1px solid #404040;border-bottom:1px solid #404040;box-shadow:inset -1px -1px 0 #808080;"></div>
<div style="position:absolute;left:777px;top:133.2px;width:66px;height:12px;line-height:12px;text-align:center;font-size:8.1px;color:#000;">Duplicate</div>
<div style="position:absolute;left:777px;top:151.5px;width:66px;height:17.30000000000001px;box-sizing:border-box;background:#d4d0c8;border-top:1px solid #fff;border-left:1px solid #fff;border-right:1px solid #404040;border-bottom:1px solid #404040;box-shadow:inset -1px -1px 0 #808080;"></div>
<div style="position:absolute;left:777px;top:153.9px;width:66px;height:12px;line-height:12px;text-align:center;font-size:8.1px;color:#000;">Delete</div>
<div style="position:absolute;left:777px;top:172.8px;width:66px;height:17.19999999999999px;box-sizing:border-box;background:#d4d0c8;border-top:1px solid #fff;border-left:1px solid #fff;border-right:1px solid #404040;border-bottom:1px solid #404040;box-shadow:inset -1px -1px 0 #808080;"></div>
<div style="position:absolute;left:777px;top:175.15px;width:66px;height:12px;line-height:12px;text-align:center;font-size:8.1px;color:#000;">Edit</div>
<div style="position:absolute;left:777px;top:197.8px;width:66px;height:16.5px;box-sizing:border-box;background:#d4d0c8;border-top:1px solid #fff;border-left:1px solid #fff;border-right:1px solid #404040;border-bottom:1px solid #404040;box-shadow:inset -1px -1px 0 #808080;"></div>
<div style="position:absolute;left:777px;top:199.8px;width:66px;height:12px;line-height:12px;text-align:center;font-size:8.1px;color:#a0a0a0;text-shadow:1px 1px 0 #fff;">Move up</div>
<div style="position:absolute;left:777px;top:218.7px;width:66px;height:16.80000000000001px;box-sizing:border-box;background:#d4d0c8;border-top:1px solid #fff;border-left:1px solid #fff;border-right:1px solid #404040;border-bottom:1px solid #404040;box-shadow:inset -1px -1px 0 #808080;"></div>
<div style="position:absolute;left:777px;top:220.85px;width:66px;height:12px;line-height:12px;text-align:center;font-size:8.1px;color:#a0a0a0;text-shadow:1px 1px 0 #fff;">Move down</div>
<div style="position:absolute;left:777px;top:243.3px;width:66px;height:16.899999999999977px;box-sizing:border-box;background:#d4d0c8;border-top:1px solid #fff;border-left:1px solid #fff;border-right:1px solid #404040;border-bottom:1px solid #404040;box-shadow:inset -1px -1px 0 #808080;"></div>
<div style="position:absolute;left:777px;top:245.5px;width:66px;height:12px;line-height:12px;text-align:center;font-size:8.1px;color:#000;">Group</div>
<div style="position:absolute;left:777px;top:264.2px;width:66px;height:18.0px;box-sizing:border-box;background:#d4d0c8;border-top:1px solid #fff;border-left:1px solid #fff;border-right:1px solid #404040;border-bottom:1px solid #404040;box-shadow:inset -1px -1px 0 #808080;"></div>
<div style="position:absolute;left:777px;top:266.95px;width:66px;height:12px;line-height:12px;text-align:center;font-size:8.1px;color:#a0a0a0;text-shadow:1px 1px 0 #fff;">Ungroup</div>
<div style="position:absolute;left:0px;top:367.5px;width:850px;height:7.5px;background:#d4d0c8;border-top:1px solid #ecebe6"></div>
<div style="position:absolute;left:0px;top:375px;width:850px;height:390px;background:#808080"></div>
<svg style="left:3px;top:376px" width="12" height="12"><rect x="0.5" y="0.5" width="11" height="11" fill="#8a949e" stroke="#5a7898"/><rect x="2" y="3" width="3" height="3" fill="#c8d8e8"/><path d="M6 3.5h4M6 5.5h4M2 7.5h8M2 9.5h8" stroke="#c8c8c8"/></svg>
<div style="position:absolute;left:17.5px;top:376.0px;height:12px;line-height:12px;font-size:8.3px;color:#cfcfcf;font-weight:normal;white-space:pre;">Dashboard Preview</div>
<svg style="left:0;top:0" width="1445" height="778" viewBox="0 0 1445 778"><defs><clipPath id="dc"><rect x="124.7" y="397" width="600.3" height="359.7"/></clipPath><pattern id="holes" x="131.7" y="400" width="15.6" height="24.3" patternUnits="userSpaceOnUse"><rect width="15.6" height="24.3" fill="#101010"/><circle cx="7.8" cy="6" r="4.8" fill="#060606"/><circle cx="0" cy="18.15" r="4.8" fill="#060606"/><circle cx="15.6" cy="18.15" r="4.8" fill="#060606"/></pattern><linearGradient id="barg" x1="0" y1="0" x2="0" y2="1"><stop offset="0" stop-color="#b4b4b4"/><stop offset="0.55" stop-color="#8a8a8a"/><stop offset="1" stop-color="#5a5a5a"/></linearGradient><linearGradient id="redg" x1="0" y1="0" x2="0" y2="1"><stop offset="0" stop-color="#ff1010"/><stop offset="0.7" stop-color="#f00000"/><stop offset="1" stop-color="#c00000"/></linearGradient><linearGradient id="grayseg" x1="0" y1="0" x2="1" y2="1"><stop offset="0" stop-color="#7a7a7a"/><stop offset="1" stop-color="#4a4a4a"/></linearGradient><radialGradient id="glowL" cx="0" cy="0.1" r="0.75"><stop offset="0" stop-color="#fff" stop-opacity="0.12"/><stop offset="1" stop-color="#fff" stop-opacity="0"/></radialGradient><radialGradient id="glowR" cx="1" cy="0.1" r="0.75"><stop offset="0" stop-color="#fff" stop-opacity="0.12"/><stop offset="1" stop-color="#fff" stop-opacity="0"/></radialGradient></defs><g clip-path="url(#dc)"><rect x="124.7" y="397" width="600.3" height="359.7" fill="url(#holes)"/><path d="M124.7 593 L272 697.5 L330 750 L124.7 750Z" fill="url(#glowL)"/><path d="M725 590 L580 697.5 L520 750 L725 750Z" fill="url(#glowR)"/><path d="M124.7 593 L268.3 694.6" stroke="#9a9a9a" stroke-width="1.7"/><circle cx="271.8" cy="697.5" r="4.3" fill="none" stroke="#b8b8b8" stroke-width="1.9"/><path d="M725 590 L583.5 694.6" stroke="#9a9a9a" stroke-width="1.7"/><circle cx="580" cy="697.5" r="4.3" fill="none" stroke="#b8b8b8" stroke-width="1.9"/><path d="M340.15 663.35 A120 120 0 1 1 509.85 663.35" fill="none" stroke="#000" stroke-width="58"/><path d="M323.67 679.83 A143.3 143.3 0 0 1 298.62 646.05 L332.40 628.00 A105 105 0 0 0 350.75 652.75Z" fill="#fecb0a"/><path d="M298.62 646.05 A143.3 143.3 0 0 1 284.45 606.46 L322.02 598.98 A105 105 0 0 0 332.40 628.00Z" fill="#fecb0a"/><path d="M284.45 606.46 A143.3 143.3 0 0 1 282.39 564.45 L320.51 568.21 A105 105 0 0 0 322.02 598.98Z" fill="#fecb0a"/><path d="M282.39 564.45 A143.3 143.3 0 0 1 292.61 523.66 L327.99 538.32 A105 105 0 0 0 320.51 568.21Z" fill="#fecb0a"/><path d="M292.61 523.66 A143.3 143.3 0 0 1 314.23 487.59 L343.83 511.89 A105 105 0 0 0 327.99 538.32Z" fill="#fecb0a"/><path d="M314.23 487.59 A143.3 143.3 0 0 1 345.39 459.35 L366.67 491.20 A105 105 0 0 0 343.83 511.89Z" fill="#fecb0a"/><path d="M345.39 459.35 A143.3 143.3 0 0 1 383.40 441.37 L394.52 478.02 A105 105 0 0 0 366.67 491.20Z" fill="#fecb0a"/><path d="M383.40 441.37 A143.3 143.3 0 0 1 425.00 435.20 L425.00 473.50 A105 105 0 0 0 394.52 478.02Z" fill="#fecb0a"/><path d="M425.00 435.20 A143.3 143.3 0 0 1 466.60 441.37 L455.48 478.02 A105 105 0 0 0 425.00 473.50Z" fill="#fecb0a"/><path d="M466.60 441.37 A143.3 143.3 0 0 1 476.57 444.80 L462.79 480.54 A105 105 0 0 0 455.48 478.02Z" fill="#fecb0a"/><path d="M476.57 444.80 A143.3 143.3 0 0 1 504.61 459.35 L483.33 491.20 A105 105 0 0 0 462.79 480.54Z" fill="url(#grayseg)"/><path d="M504.61 459.35 A143.3 143.3 0 0 1 535.77 487.59 L506.17 511.89 A105 105 0 0 0 483.33 491.20Z" fill="url(#grayseg)"/><path d="M535.77 487.59 A143.3 143.3 0 0 1 557.39 523.66 L522.01 538.32 A105 105 0 0 0 506.17 511.89Z" fill="url(#grayseg)"/><path d="M557.39 523.66 A143.3 143.3 0 0 1 567.61 564.45 L529.49 568.21 A105 105 0 0 0 522.01 538.32Z" fill="url(#grayseg)"/><path d="M567.61 564.45 A143.3 143.3 0 0 1 565.55 606.46 L527.98 598.98 A105 105 0 0 0 529.49 568.21Z" fill="url(#grayseg)"/><path d="M565.55 606.46 A143.3 143.3 0 0 1 551.38 646.05 L517.60 628.00 A105 105 0 0 0 527.98 598.98Z" fill="url(#grayseg)"/><path d="M551.38 646.05 A143.3 143.3 0 0 1 526.33 679.83 L499.25 652.75 A105 105 0 0 0 517.60 628.00Z" fill="url(#grayseg)"/><path d="M352.17 651.33L322.47 681.03" stroke="#000" stroke-width="2.8"/><path d="M334.16 627.05L297.12 646.85" stroke="#000" stroke-width="2.8"/><path d="M323.98 598.59L282.79 606.79" stroke="#000" stroke-width="2.8"/><path d="M322.50 568.40L280.70 564.29" stroke="#000" stroke-width="2.8"/><path d="M329.84 539.08L291.04 523.01" stroke="#000" stroke-width="2.8"/><path d="M345.38 513.16L312.91 486.51" stroke="#000" stroke-width="2.8"/><path d="M367.78 492.86L344.44 457.94" stroke="#000" stroke-width="2.8"/><path d="M395.10 479.94L382.91 439.74" stroke="#000" stroke-width="2.8"/><path d="M425.00 475.50L425.00 433.50" stroke="#000" stroke-width="2.8"/><path d="M454.90 479.94L467.09 439.74" stroke="#000" stroke-width="2.8"/><path d="M482.22 492.86L505.56 457.94" stroke="#000" stroke-width="2.8"/><path d="M504.62 513.16L537.09 486.51" stroke="#000" stroke-width="2.8"/><path d="M520.16 539.08L558.96 523.01" stroke="#000" stroke-width="2.8"/><path d="M527.50 568.40L569.30 564.29" stroke="#000" stroke-width="2.8"/><path d="M526.02 598.59L567.21 606.79" stroke="#000" stroke-width="2.8"/><path d="M515.84 627.05L552.88 646.85" stroke="#000" stroke-width="2.8"/><path d="M497.83 651.33L527.53 681.03" stroke="#000" stroke-width="2.8"/><path d="M339.54 700.55 A149 149 0 1 1 510.46 700.55" fill="none" stroke="#c8c8c8" stroke-width="2.8"/><path d="M319.64 683.86L313.63 689.87" stroke="#c8c8c8" stroke-width="2.2"/><path d="M293.59 648.74L286.10 652.74" stroke="#c8c8c8" stroke-width="2.2"/><path d="M278.86 607.57L270.53 609.23" stroke="#c8c8c8" stroke-width="2.2"/><path d="M276.72 563.90L268.26 563.06" stroke="#c8c8c8" stroke-width="2.2"/><path d="M287.34 521.48L279.49 518.23" stroke="#c8c8c8" stroke-width="2.2"/><path d="M309.82 483.98L303.25 478.58" stroke="#c8c8c8" stroke-width="2.2"/><path d="M342.22 454.61L337.50 447.54" stroke="#c8c8c8" stroke-width="2.2"/><path d="M381.75 435.92L379.28 427.78" stroke="#c8c8c8" stroke-width="2.2"/><path d="M425.00 429.50L425.00 421.00" stroke="#c8c8c8" stroke-width="2.2"/><path d="M468.25 435.92L470.72 427.78" stroke="#c8c8c8" stroke-width="2.2"/><path d="M507.78 454.61L512.50 447.54" stroke="#c8c8c8" stroke-width="2.2"/><path d="M540.18 483.98L546.75 478.58" stroke="#c8c8c8" stroke-width="2.2"/><path d="M562.66 521.48L570.51 518.23" stroke="#c8c8c8" stroke-width="2.2"/><path d="M573.28 563.90L581.74 563.06" stroke="#c8c8c8" stroke-width="2.2"/><path d="M571.14 607.57L579.47 609.23" stroke="#c8c8c8" stroke-width="2.2"/><path d="M556.41 648.74L563.90 652.74" stroke="#c8c8c8" stroke-width="2.2"/><path d="M530.36 683.86L536.37 689.87" stroke="#c8c8c8" stroke-width="2.2"/><path d="M360.30 643.20 A91.5 91.5 0 1 1 489.70 643.20" fill="none" stroke="#3c3c3c" stroke-width="2.2"/><path d="M360.30 643.20L353.94 649.56" stroke="#3c3c3c" stroke-width="2"/><path d="M344.30 621.63L336.37 625.88" stroke="#3c3c3c" stroke-width="2"/><path d="M335.26 596.35L326.43 598.11" stroke="#3c3c3c" stroke-width="2"/><path d="M333.94 569.53L324.98 568.65" stroke="#3c3c3c" stroke-width="2"/><path d="M340.47 543.48L332.15 540.04" stroke="#3c3c3c" stroke-width="2"/><path d="M354.27 520.45L347.31 514.74" stroke="#3c3c3c" stroke-width="2"/><path d="M374.17 502.42L369.17 494.94" stroke="#3c3c3c" stroke-width="2"/><path d="M398.44 490.94L395.83 482.33" stroke="#3c3c3c" stroke-width="2"/><path d="M425.00 487.00L425.00 478.00" stroke="#3c3c3c" stroke-width="2"/><path d="M451.56 490.94L454.17 482.33" stroke="#3c3c3c" stroke-width="2"/><path d="M475.83 502.42L480.83 494.94" stroke="#3c3c3c" stroke-width="2"/><path d="M495.73 520.45L502.69 514.74" stroke="#3c3c3c" stroke-width="2"/><path d="M509.53 543.48L517.85 540.04" stroke="#3c3c3c" stroke-width="2"/><path d="M516.06 569.53L525.02 568.65" stroke="#3c3c3c" stroke-width="2"/><path d="M514.74 596.35L523.57 598.11" stroke="#3c3c3c" stroke-width="2"/><path d="M505.70 621.63L513.63 625.88" stroke="#3c3c3c" stroke-width="2"/><path d="M489.70 643.20L496.06 649.56" stroke="#3c3c3c" stroke-width="2"/><text x="305.4" y="701.3" font-family="Liberation Sans" font-size="22" fill="#fff" text-anchor="middle">0</text><text x="259.4" y="619.0" font-family="Liberation Sans" font-size="22" fill="#fff" text-anchor="middle">1</text><text x="268.5" y="523.2" font-family="Liberation Sans" font-size="22" fill="#fff" text-anchor="middle">2</text><text x="331.2" y="447.6" font-family="Liberation Sans" font-size="22" fill="#fff" text-anchor="middle">3</text><text x="424.6" y="419.3" font-family="Liberation Sans" font-size="22" fill="#fff" text-anchor="middle">4</text><text x="515.9" y="446.0" font-family="Liberation Sans" font-size="22" fill="#fff" text-anchor="middle">5</text><text x="579.0" y="520.6" font-family="Liberation Sans" font-size="22" fill="#fff" text-anchor="middle">6</text><text x="589.0" y="616.8" font-family="Liberation Sans" font-size="22" fill="#fff" text-anchor="middle">7</text><text x="543.5" y="701.6" font-family="Liberation Sans" font-size="22" fill="#fff" text-anchor="middle">8</text><path d="M372.4 518H415.5L449.7 600L462.3 518H486.6L474 628H428L394.9 546L385 628H358Z" fill="#fff"/><text x="424" y="695.5" font-family="Liberation Sans" font-size="53" fill="#fff" text-anchor="middle">4625</text><text x="141.0" y="413.5" font-family="Liberation Sans" font-size="15.3" fill="#fff" text-anchor="middle">40</text><text x="201.5" y="413.5" font-family="Liberation Sans" font-size="15.3" fill="#fff" text-anchor="middle">80</text><text x="262.0" y="413.5" font-family="Liberation Sans" font-size="15.3" fill="#fff" text-anchor="middle">120</text><path d="M141 417.0V426.5H262V417.0M201.5 417.0V426.5" fill="none" stroke="#fff" stroke-width="1.7"/><rect x="141" y="433.7" width="121" height="20.600000000000023" fill="url(#barg)"/><rect x="141" y="433.7" width="84" height="20.600000000000023" fill="url(#redg)"/><text x="147" y="450.0" font-family="Liberation Sans" font-size="17" fill="#000">96 C</text><path d="M129.5 437.7V468H158M245 468H274.4V437.7" fill="none" stroke="#fff" stroke-width="1.4"/><text x="201.5" y="473" font-family="Liberation Sans" font-size="12.6" fill="#fff" text-anchor="middle">WATER TEMP</text><text x="141.0" y="501.5" font-family="Liberation Sans" font-size="13" fill="#fff" text-anchor="middle">0</text><text x="186.2" y="501.5" font-family="Liberation Sans" font-size="13" fill="#fff" text-anchor="middle">50</text><text x="231.5" y="501.5" font-family="Liberation Sans" font-size="13" fill="#fff" text-anchor="middle">100</text><path d="M141 504.5V514.0H231.5V504.5M186.25 504.5V514.0" fill="none" stroke="#fff" stroke-width="1.7"/><rect x="141" y="521" width="90.5" height="20.299999999999955" fill="url(#barg)"/><rect x="141" y="521" width="2.1999999999999886" height="20.299999999999955" fill="#e00000"/><text x="147" y="537.0" font-family="Liberation Sans" font-size="16" fill="#000">3 %</text><path d="M129.5 525V554H150.5M222 554H244.2V525" fill="none" stroke="#fff" stroke-width="1.4"/><text x="186.25" y="559" font-family="Liberation Sans" font-size="11.5" fill="#fff" text-anchor="middle">FUEL LEVEL</text><text x="587.0" y="413.5" font-family="Liberation Sans" font-size="15.3" fill="#fff" text-anchor="middle">60</text><text x="647.5" y="413.5" font-family="Liberation Sans" font-size="15.3" fill="#fff" text-anchor="middle">100</text><text x="708.0" y="413.5" font-family="Liberation Sans" font-size="15.3" fill="#fff" text-anchor="middle">140</text><path d="M587 417.0V426.5H708V417.0M647.5 417.0V426.5" fill="none" stroke="#fff" stroke-width="1.7"/><rect x="587" y="433.7" width="121" height="20.600000000000023" fill="url(#barg)"/><text x="593" y="450.0" font-family="Liberation Sans" font-size="17" fill="#000">0 C</text><path d="M576 437.7V468H616M678.4 468H720.6V437.7" fill="none" stroke="#fff" stroke-width="1.4"/><text x="647.2" y="473" font-family="Liberation Sans" font-size="12.6" fill="#fff" text-anchor="middle">OIL TEMP</text><text x="618.5" y="501.5" font-family="Liberation Sans" font-size="13" fill="#fff" text-anchor="middle">0</text><text x="663.9" y="501.5" font-family="Liberation Sans" font-size="13" fill="#fff" text-anchor="middle">4</text><text x="709.3" y="501.5" font-family="Liberation Sans" font-size="13" fill="#fff" text-anchor="middle">8</text><path d="M618.5 504.5V514.0H709.3V504.5M663.9 504.5V514.0" fill="none" stroke="#fff" stroke-width="1.7"/><rect x="618.5" y="521" width="90.79999999999995" height="20.299999999999955" fill="url(#barg)"/><rect x="618.5" y="521" width="48.10000000000002" height="20.299999999999955" fill="#fecb0a"/><text x="624.5" y="537.0" font-family="Liberation Sans" font-size="17.5" fill="#000">4.3 bar</text><path d="M607.6 525V554H629.8M697 554H721.3V525" fill="none" stroke="#fff" stroke-width="1.4"/><text x="663.4" y="559" font-family="Liberation Sans" font-size="11.5" fill="#fff" text-anchor="middle">OIL PRESS</text><g fill="#fff"><rect x="157" y="665.3" width="18.5" height="3.2" rx="0.8"/><rect x="164" y="668" width="4.5" height="3"/><path d="M155 670.5H176L179.5 675H184V694.7H180L176.5 696.7H157L151.8 692V686H148.5V690.5H145.6V672H148.5V677H151.8V674Z"/><rect x="183" y="675" width="8.8" height="19.7" rx="2.2"/></g><path d="M171.5 673.5L163.5 684.5H168L165.5 692.5L174 680.5H169.5Z" fill="#000"/><g fill="none" stroke="#353535" stroke-width="3.2"><rect x="661.4" y="669.6" width="38" height="24.6"/></g><g fill="#353535"><rect x="664" y="665" width="8.5" height="4"/><rect x="686.5" y="665" width="8.5" height="4"/></g><path d="M664.5 680H672M685 680H693.5M689.2 676V684" stroke="#353535" stroke-width="2.2"/><path d="M124.7 712.7H269Q273 712.7 276 715L329.5 750H124.7Z" fill="#fecb0a"/><path d="M725 713H576Q572 713 569 715.5L520 750H725Z" fill="#fecb0a"/><circle cx="140.6" cy="734.5" r="10.5" fill="none" stroke="#000" stroke-width="2"/><path d="M140.6 727V734.5L136 740" fill="none" stroke="#000" stroke-width="1.8"/><text x="158.5" y="745" font-family="Liberation Sans" font-size="30.5" fill="#000">17:49:58</text><text x="586" y="745.3" font-family="Liberation Sans" font-size="38.3" fill="#000">135</text><text x="654.5" y="745.3" font-family="Liberation Sans" font-size="26" fill="#000">km/h</text><g fill="#8d8d8d" transform="translate(0,737.3) skewX(-19) translate(0,-737.3)"><path d="M383.3 737.3V713.5Q383.3 709.5 387.3 709.5H408V714.8H390.3V720H405V726H390.3V732H405.5V737.3Z"/><path d="M409.5 733V714Q409.5 709.5 414 709.5H435.5L434 714.8H416.5V732H428.8V737.3H413.5Q409.5 737.3 409.5 733Z"/><path d="M432 709.5H439V730Q439 732 441 732H448.5V716L456 712V731.5Q456 737.3 450 737.3H437.5Q432 737.3 432 731.5Z"/></g><path d="M453 716L471 704.5L455.5 719Z" fill="#a8861e"/><text x="377.5" y="750.2" font-family="Liberation Sans" font-style="italic" font-size="14.5" fill="#a08020" textLength="77" lengthAdjust="spacingAndGlyphs">MASTER</text></g></svg>
<div style="position:absolute;left:850px;top:70px;width:3px;height:695px;background:#d4d0c8;border-left:1px solid #e8e6e0"></div>
<div style="position:absolute;left:1220px;top:70px;width:3px;height:695px;background:#d4d0c8;border-left:1px solid #e8e6e0"></div>
<div style="position:absolute;left:0px;top:765px;width:1445px;height:13px;background:#d4d0c8"></div>
<div style="position:absolute;left:853px;top:70px;width:367px;height:14px;background:#808080"></div><svg style="left:856px;top:71px" width="12" height="12"><rect x="0.5" y="0.5" width="11" height="11" fill="#8a949e" stroke="#5a7898"/><rect x="2" y="3" width="3" height="3" fill="#c8d8e8"/><path d="M6 3.5h4M6 5.5h4M2 7.5h8M2 9.5h8" stroke="#c8c8c8"/></svg><div style="position:absolute;left:870.5px;top:71.3px;height:12px;line-height:12px;font-size:8.3px;color:#cfcfcf;font-weight:normal;white-space:pre;">Page Editor</div>
<div style="position:absolute;left:853px;top:84px;width:367px;height:1px;background:#e8e6e0"></div>
<svg style="left:855px;top:87px" width="13" height="12"><path d="M1 2.5h4l1 1.5h5v7H1z" fill="#c8c8c8" stroke="#707070" stroke-width="1"/><path d="M1 11l2.5-5h9.5l-2.5 5z" fill="#e8e8e8" stroke="#707070" stroke-width="1"/></svg>
<svg style="left:873px;top:87px" width="12" height="12"><rect x="0.5" y="0.5" width="11" height="11" rx="1.5" fill="#5a7fb0" stroke="#3d5c8a"/><rect x="2.5" y="1" width="7" height="4" fill="#f0f0f0"/><rect x="3" y="7.5" width="6" height="4" fill="#e8e8e8"/><rect x="4" y="8.5" width="1.5" height="2" fill="#3d5c8a"/></svg>
<div style="position:absolute;left:889px;top:86px;width:2px;height:15px;border-left:1px solid #a09c94;border-right:1px solid #fff"></div>
<svg style="left:896px;top:87px" width="12" height="12"><circle cx="6.0" cy="6.0" r="5.5" fill="#3a7bd5" stroke="#2a5fae"/><text x="6.0" y="9.3" font-family="Liberation Sans" font-weight="bold" font-size="9.5" fill="#fff" text-anchor="middle">?</text></svg>
<div style="position:absolute;left:948px;top:87.5px;height:12px;line-height:12px;font-size:8.6px;color:#000;font-weight:normal;white-space:pre;letter-spacing:-0.15px;">Page size:  806</div>
<div style="position:absolute;left:1024px;top:87.5px;height:12px;line-height:12px;font-size:8.6px;color:#000;font-weight:normal;white-space:pre;letter-spacing:-0.15px;">Total size: 4268 (42%)</div>
<div style="position:absolute;left:853.5px;top:104px;width:182px;height:516px;background:#fff;border-top:1px solid #404040;border-left:1px solid #404040;border-right:1px solid #fff;border-bottom:1px solid #fff;box-shadow:-1px -1px 0 #a0a0a0"></div>
<div style="position:absolute;left:855px;top:105px;width:179px;height:500px;overflow:hidden"><div style="position:absolute;left:-855px;top:-105px;width:1445px;height:778px"><div style="position:absolute;left:860px;top:107px;width:8px;height:8px;border:1px solid #a0a0a0;background:#fff"></div><div style="position:absolute;left:862px;top:110.5px;width:4px;height:1px;background:#404040"></div><svg style="left:872px;top:105px" width="12" height="12"><rect x="0.5" y="0.5" width="11" height="11" rx="1" fill="#f4f6f8" stroke="#6c8098"/><rect x="1" y="1" width="10" height="1.5" fill="#8aa0b8"/><rect x="2.5" y="4" width="3" height="3" fill="#b8c8d8"/><path d="M6.5 4.5h3M6.5 6.5h3M2.5 8.5h7" stroke="#b0b8c0"/></svg><div style="position:absolute;left:885.5px;top:105px;width:43px;height:12px;background:#d4d0c8"></div><div style="position:absolute;left:886.5px;top:105.5px;height:12px;line-height:12px;font-size:8.6px;color:#000;font-weight:normal;white-space:pre;letter-spacing:-0.15px;">pg_generic</div><div style="position:absolute;left:874.5px;top:119px;width:8px;height:8px;border:1px solid #a0a0a0;background:#fff"></div><div style="position:absolute;left:876.5px;top:122.5px;width:4px;height:1px;background:#404040"></div><svg style="left:886px;top:118px" width="12" height="10"><path d="M0 0.5h4.5l1 1.5H12v8H0z" fill="#8c8c8c"/></svg><div style="position:absolute;left:901px;top:117.5px;height:12px;line-height:12px;font-size:8.6px;color:#000;font-weight:normal;white-space:pre;letter-spacing:-0.15px;">RPM and gear</div><svg style="left:900px;top:129px" width="12" height="12"><circle cx="5.8" cy="5.8" r="5" fill="none" stroke="#000" stroke-width="1.5"/></svg><svg style="left:900px;top:140.3px" width="12" height="13"><path d="M0.5 5.5L4 1.5L7 1L8 3.5L5 5L2.5 7z" fill="#000"/><ellipse cx="7.8" cy="8.2" rx="1.8" ry="4" transform="rotate(-40 7.8 8.2)" fill="#fff" stroke="#000" stroke-width="0.9"/></svg><div style="position:absolute;left:915px;top:141.3px;height:12px;line-height:12px;font-size:8.6px;color:#000;font-weight:normal;white-space:pre;letter-spacing:-0.15px;">(RPM bar)     ecu.rpm</div><svg style="left:900px;top:152.3px" width="12" height="13"><path d="M0.5 5.5L4 1.5L7 1L8 3.5L5 5L2.5 7z" fill="#000"/><ellipse cx="7.8" cy="8.2" rx="1.8" ry="4" transform="rotate(-40 7.8 8.2)" fill="#fff" stroke="#000" stroke-width="0.9"/></svg><div style="position:absolute;left:915px;top:153.3px;height:12px;line-height:12px;font-size:8.6px;color:#000;font-weight:normal;white-space:pre;letter-spacing:-0.15px;">(Gear indicator)     ecu.gear</div><svg style="left:900px;top:164.5px" width="12" height="13"><text x="5.5" y="11.5" font-family="Liberation Serif" font-weight="bold" font-size="14.5" fill="#000" text-anchor="middle">T</text></svg><div style="position:absolute;left:915px;top:165.5px;height:12px;line-height:12px;font-size:8.6px;color:#000;font-weight:normal;white-space:pre;letter-spacing:-0.15px;">ecu.rpm</div><div style="position:absolute;left:874.5px;top:179px;width:8px;height:8px;border:1px solid #a0a0a0;background:#fff"></div><div style="position:absolute;left:876.5px;top:182.5px;width:4px;height:1px;background:#404040"></div><svg style="left:886px;top:178px" width="12" height="10"><path d="M0 0.5h4.5l1 1.5H12v8H0z" fill="#8c8c8c"/></svg><div style="position:absolute;left:901px;top:177.5px;height:12px;line-height:12px;font-size:8.6px;color:#000;font-weight:normal;white-space:pre;letter-spacing:-0.15px;">Speed</div><svg style="left:900px;top:189px" width="12" height="12"><rect x="0.5" y="0.5" width="11" height="11" rx="1" fill="#c8c8c8" stroke="#a8a8a8"/><path d="M1.5 3.5h9M1.5 6h9M1.5 8.5h9" stroke="#f0f0f0" stroke-width="1"/><rect x="1.5" y="9.5" width="9" height="1.5" fill="#fff"/></svg><div style="position:absolute;left:915px;top:189.5px;height:12px;line-height:12px;font-size:8.6px;color:#000;font-weight:normal;white-space:pre;letter-spacing:-0.15px;">textBackground.png</div><svg style="left:900px;top:200.5px" width="12" height="13"><text x="5.5" y="11.5" font-family="Liberation Serif" font-weight="bold" font-size="14.5" fill="#000" text-anchor="middle">T</text></svg><div style="position:absolute;left:915px;top:201.5px;height:12px;line-height:12px;font-size:8.6px;color:#000;font-weight:normal;white-space:pre;letter-spacing:-0.15px;">ecu.speed</div><svg style="left:900px;top:212.5px" width="12" height="13"><text x="5.5" y="11.5" font-family="Liberation Serif" font-weight="bold" font-size="14.5" fill="#000" text-anchor="middle">T</text></svg><div style="position:absolute;left:915px;top:213.5px;height:12px;line-height:12px;font-size:8.6px;color:#000;font-weight:normal;white-space:pre;letter-spacing:-0.15px;">"km/h"</div><div style="position:absolute;left:874.5px;top:227px;width:8px;height:8px;border:1px solid #a0a0a0;background:#fff"></div><div style="position:absolute;left:876.5px;top:230.5px;width:4px;height:1px;background:#404040"></div><svg style="left:886px;top:226px" width="12" height="10"><path d="M0 0.5h4.5l1 1.5H12v8H0z" fill="#8c8c8c"/></svg><div style="position:absolute;left:901px;top:225.5px;height:12px;line-height:12px;font-size:8.6px;color:#000;font-weight:normal;white-space:pre;letter-spacing:-0.15px;">RTC</div><svg style="left:900px;top:237px" width="12" height="12"><rect x="0.5" y="0.5" width="11" height="11" rx="1" fill="#c8c8c8" stroke="#a8a8a8"/><path d="M1.5 3.5h9M1.5 6h9M1.5 8.5h9" stroke="#f0f0f0" stroke-width="1"/><rect x="1.5" y="9.5" width="9" height="1.5" fill="#fff"/></svg><div style="position:absolute;left:915px;top:237.5px;height:12px;line-height:12px;font-size:8.6px;color:#000;font-weight:normal;white-space:pre;letter-spacing:-0.15px;">textBackground.png</div><svg style="left:900px;top:249px" width="12" height="12"><circle cx="6" cy="6" r="5" fill="none" stroke="#000" stroke-width="1.2"/><path d="M6 2.5V6L8.5 8" fill="none" stroke="#000" stroke-width="1.1"/></svg><div style="position:absolute;left:915px;top:249.5px;height:12px;line-height:12px;font-size:8.6px;color:#000;font-weight:normal;white-space:pre;letter-spacing:-0.15px;">RTC</div><svg style="left:886px;top:263px" width="12" height="8"><rect x="0.8" y="0.8" width="10.4" height="6.4" rx="3.2" fill="none" stroke="#4a5a6a" stroke-width="1.3"/><circle cx="4" cy="4" r="2" fill="#4a5a6a"/></svg><div style="position:absolute;left:901px;top:261.5px;height:12px;line-height:12px;font-size:8.6px;color:#000;font-weight:normal;white-space:pre;letter-spacing:-0.15px;">ecu.fuelLevel     "FUEL LEVEL"</div><svg style="left:886px;top:275px" width="12" height="8"><rect x="0.8" y="0.8" width="10.4" height="6.4" rx="3.2" fill="none" stroke="#4a5a6a" stroke-width="1.3"/><circle cx="4" cy="4" r="2" fill="#4a5a6a"/></svg><div style="position:absolute;left:901px;top:273.5px;height:12px;line-height:12px;font-size:8.6px;color:#000;font-weight:normal;white-space:pre;letter-spacing:-0.15px;">ecu.oilPress     "OIL PRESS"     battery</div><svg style="left:886px;top:287px" width="12" height="8"><rect x="0.8" y="0.8" width="10.4" height="6.4" rx="3.2" fill="none" stroke="#4a5a6a" stroke-width="1.3"/><circle cx="4" cy="4" r="2" fill="#4a5a6a"/></svg><div style="position:absolute;left:901px;top:285.5px;height:12px;line-height:12px;font-size:8.6px;color:#000;font-weight:normal;white-space:pre;letter-spacing:-0.15px;">ecu.clt     "WATER TEMP"</div><svg style="left:886px;top:299px" width="12" height="8"><rect x="0.8" y="0.8" width="10.4" height="6.4" rx="3.2" fill="none" stroke="#4a5a6a" stroke-width="1.3"/><circle cx="4" cy="4" r="2" fill="#4a5a6a"/></svg><div style="position:absolute;left:901px;top:297.5px;height:12px;line-height:12px;font-size:8.6px;color:#000;font-weight:normal;white-space:pre;letter-spacing:-0.15px;">ecu.oilTemp     "OIL TEMP"</div><svg style="left:886px;top:309px" width="12" height="12"><rect x="0.5" y="0.5" width="11" height="11" rx="1" fill="#c8c8c8" stroke="#a8a8a8"/><path d="M1.5 3.5h9M1.5 6h9M1.5 8.5h9" stroke="#f0f0f0" stroke-width="1"/><rect x="1.5" y="9.5" width="9" height="1.5" fill="#fff"/></svg><div style="position:absolute;left:901px;top:309.5px;height:12px;line-height:12px;font-size:8.6px;color:#000;font-weight:normal;white-space:pre;letter-spacing:-0.15px;">EcumasterLogo.png</div><svg style="left:886px;top:321px" width="12" height="12"><rect x="0.5" y="0.5" width="11" height="11" rx="1" fill="#c8c8c8" stroke="#a8a8a8"/><path d="M1.5 3.5h9M1.5 6h9M1.5 8.5h9" stroke="#f0f0f0" stroke-width="1"/><rect x="1.5" y="9.5" width="9" height="1.5" fill="#fff"/></svg><div style="position:absolute;left:901px;top:321.5px;height:12px;line-height:12px;font-size:8.6px;color:#000;font-weight:normal;white-space:pre;letter-spacing:-0.15px;">battery.png</div><svg style="left:886px;top:333px" width="12" height="12"><rect x="0.5" y="0.5" width="11" height="11" rx="1" fill="#c8c8c8" stroke="#a8a8a8"/><path d="M1.5 3.5h9M1.5 6h9M1.5 8.5h9" stroke="#f0f0f0" stroke-width="1"/><rect x="1.5" y="9.5" width="9" height="1.5" fill="#fff"/></svg><div style="position:absolute;left:901px;top:333.5px;height:12px;line-height:12px;font-size:8.6px;color:#000;font-weight:normal;white-space:pre;letter-spacing:-0.15px;">checkEngine.png     ecu.errorFlags</div><svg style="left:886px;top:345px" width="12" height="12"><rect x="0.5" y="0.5" width="11" height="11" rx="1" fill="#c8c8c8" stroke="#a8a8a8"/><path d="M1.5 3.5h9M1.5 6h9M1.5 8.5h9" stroke="#f0f0f0" stroke-width="1"/><rect x="1.5" y="9.5" width="9" height="1.5" fill="#fff"/></svg><div style="position:absolute;left:901px;top:345.5px;height:12px;line-height:12px;font-size:8.6px;color:#000;font-weight:normal;white-space:pre;letter-spacing:-0.15px;">timer.png</div></div></div>
<div style="position:absolute;left:854.5px;top:607.5px;width:180px;height:11px;background:#ece9e6"></div>
<div style="position:absolute;left:854.5px;top:607.5px;width:12px;height:11px;box-sizing:border-box;background:#d4d0c8;border-top:1px solid #fff;border-left:1px solid #fff;border-right:1px solid #404040;border-bottom:1px solid #404040;box-shadow:inset -1px -1px 0 #808080;"></div>
<svg style="left:858px;top:610px" width="4" height="6"><path d="M4 0V6L0 3z" fill="#000"/></svg>
<div style="position:absolute;left:866.5px;top:607.5px;width:140px;height:11px;box-sizing:border-box;background:#d4d0c8;border-top:1px solid #fff;border-left:1px solid #fff;border-right:1px solid #404040;border-bottom:1px solid #404040;box-shadow:inset -1px -1px 0 #808080;"></div>
<div style="position:absolute;left:1022.5px;top:607.5px;width:12px;height:11px;box-sizing:border-box;background:#d4d0c8;border-top:1px solid #fff;border-left:1px solid #fff;border-right:1px solid #404040;border-bottom:1px solid #404040;box-shadow:inset -1px -1px 0 #808080;"></div>
<svg style="left:1027px;top:610px" width="4" height="6"><path d="M0 0V6L4 3z" fill="#000"/></svg>
<div style="position:absolute;left:1037.5px;top:104.5px;width:182px;height:516px;background:#fff;border-top:1px solid #404040;border-left:1px solid #404040;box-shadow:-1px -1px 0 #a0a0a0"></div>
<div style="position:absolute;left:1038.5px;top:105.0px;width:11.5px;height:13.43px;background:#d4d0c8"></div>
<div style="position:absolute;left:1050px;top:117.43px;width:168px;height:1px;background:#e4e1da"></div>
<div style="position:absolute;left:1128px;top:105.0px;width:1px;height:13.43px;background:#e4e1da"></div>
<div style="position:absolute;left:1052.5px;top:106.515px;height:12px;line-height:12px;font-size:8.6px;color:#000;font-weight:normal;white-space:pre;letter-spacing:-0.15px;">Name</div>
<div style="position:absolute;left:1131.5px;top:106.515px;height:12px;line-height:12px;font-size:8.6px;color:#000;font-weight:normal;white-space:pre;letter-spacing:-0.15px;">pg_generic</div>
<div style="position:absolute;left:1038.5px;top:118.43px;width:11.5px;height:13.43px;background:#d4d0c8"></div>
<div style="position:absolute;left:1050px;top:130.86px;width:168px;height:1px;background:#e4e1da"></div>
<div style="position:absolute;left:1128px;top:118.43px;width:1px;height:13.43px;background:#e4e1da"></div>
<div style="position:absolute;left:1052.5px;top:119.94500000000001px;height:12px;line-height:12px;font-size:8.6px;color:#000;font-weight:normal;white-space:pre;letter-spacing:-0.15px;">Type</div>
<div style="position:absolute;left:1131.5px;top:119.94500000000001px;height:12px;line-height:12px;font-size:8.6px;color:#000;font-weight:normal;white-space:pre;letter-spacing:-0.15px;">Page</div>
<div style="position:absolute;left:1038.5px;top:131.86px;width:11.5px;height:13.43px;background:#d4d0c8"></div>
<div style="position:absolute;left:1050px;top:144.29000000000002px;width:168px;height:1px;background:#e4e1da"></div>
<div style="position:absolute;left:1128px;top:131.86px;width:1px;height:13.43px;background:#e4e1da"></div>
<div style="position:absolute;left:1052.5px;top:133.37500000000003px;height:12px;line-height:12px;font-size:8.6px;color:#000;font-weight:normal;white-space:pre;letter-spacing:-0.15px;">Activate channel</div>
<div style="position:absolute;left:1038.5px;top:145.29px;width:11.5px;height:13.43px;background:#d4d0c8"></div>
<div style="position:absolute;left:1050px;top:157.72px;width:168px;height:1px;background:#e4e1da"></div>
<div style="position:absolute;left:1128px;top:145.29px;width:1px;height:13.43px;background:#e4e1da"></div>
<div style="position:absolute;left:1052.5px;top:146.805px;height:12px;line-height:12px;font-size:8.6px;color:#000;font-weight:normal;white-space:pre;letter-spacing:-0.15px;">Background style</div>
<div style="position:absolute;left:1131.5px;top:146.805px;height:12px;line-height:12px;font-size:8.6px;color:#000;font-weight:normal;white-space:pre;letter-spacing:-0.15px;">Theme 1</div>
<div style="position:absolute;left:1038.5px;top:158.72px;width:11.5px;height:13.43px;background:#d4d0c8"></div>
<div style="position:absolute;left:1050px;top:171.15px;width:168px;height:1px;background:#e4e1da"></div>
<div style="position:absolute;left:1128px;top:158.72px;width:1px;height:13.43px;background:#e4e1da"></div>
<div style="position:absolute;left:1052.5px;top:160.235px;height:12px;line-height:12px;font-size:8.6px;color:#000;font-weight:normal;white-space:pre;letter-spacing:-0.15px;">Background color</div>
<div style="position:absolute;left:1132px;top:160px;width:15px;height:11px;background:#dedede;border:1px solid #000"></div>
<div style="position:absolute;left:1153.5px;top:160.0px;height:12px;line-height:12px;font-size:8.6px;color:#000;font-weight:normal;white-space:pre;letter-spacing:-0.15px;">(222,222,222)</div>
<div style="position:absolute;left:853px;top:619.5px;width:367px;height:5px;background:#d4d0c8"></div>
<div style="position:absolute;left:853px;top:624px;width:367px;height:13px;background:#808080"></div><svg style="left:856px;top:625px" width="11" height="11"><rect x="0.5" y="0.5" width="10" height="10" fill="#e8f0c8" stroke="#8a9a5a"/><rect x="1" y="1" width="9" height="2" fill="#9ab060"/><rect x="2" y="5" width="7" height="4" fill="#c0d090"/></svg><div style="position:absolute;left:870.5px;top:624.8px;height:12px;line-height:12px;font-size:8.3px;color:#cfcfcf;font-weight:normal;white-space:pre;">CANbus / Serial Setup</div>
<div style="position:absolute;left:853px;top:637px;width:367px;height:1px;background:#e8e6e0"></div>
<svg style="left:855px;top:640px" width="13" height="12"><path d="M1 2.5h4l1 1.5h5v7H1z" fill="#c8c8c8" stroke="#707070" stroke-width="1"/><path d="M1 11l2.5-5h9.5l-2.5 5z" fill="#e8e8e8" stroke="#707070" stroke-width="1"/></svg>
<svg style="left:873px;top:640px" width="12" height="12"><rect x="0.5" y="0.5" width="11" height="11" rx="1.5" fill="#5a7fb0" stroke="#3d5c8a"/><rect x="2.5" y="1" width="7" height="4" fill="#f0f0f0"/><rect x="3" y="7.5" width="6" height="4" fill="#e8e8e8"/><rect x="4" y="8.5" width="1.5" height="2" fill="#3d5c8a"/></svg>
<svg style="left:891px;top:641px" width="12" height="10"><rect x="0.5" y="0.5" width="11" height="9" fill="#f0f0f0" stroke="#909090"/><rect x="1" y="1" width="10" height="1.5" fill="#8fc070"/></svg>
<div style="position:absolute;left:906px;top:639px;width:2px;height:15px;border-left:1px solid #a09c94;border-right:1px solid #fff"></div>
<svg style="left:913px;top:640px" width="12" height="12"><circle cx="6.0" cy="6.0" r="5.5" fill="#3a7bd5" stroke="#2a5fae"/><text x="6.0" y="9.3" font-family="Liberation Sans" font-weight="bold" font-size="9.5" fill="#fff" text-anchor="middle">?</text></svg>
<div style="position:absolute;left:853.5px;top:655.5px;width:366px;height:110px;background:#fff;border-top:1px solid #404040;border-left:1px solid #404040;box-shadow:-1px -1px 0 #a0a0a0"></div>
<div style="position:absolute;left:854.5px;top:656.5px;width:365px;height:13.5px;background:#d4d0c8"></div>
<div style="position:absolute;left:854.5px;top:656.5px;width:13px;height:95px;background:#d4d0c8"></div>
<div style="position:absolute;left:857px;top:660px;width:8px;height:8px;border:1px solid #a0a0a0;background:#fff"></div><div style="position:absolute;left:859px;top:663.5px;width:4px;height:1px;background:#404040"></div>
<div style="position:absolute;left:870px;top:658.0px;height:12px;line-height:12px;font-size:8.4px;color:#909090;font-weight:bold;white-space:pre;">CANbus / Serial Setup</div>
<div style="position:absolute;left:867.5px;top:670.0px;width:169px;height:13.6px;background:#d4d0c8"></div>
<div style="position:absolute;left:1037px;top:670.0px;width:181.5px;height:13.6px;background:#fff"></div>
<div style="position:absolute;left:867.5px;top:683.1px;width:351px;height:1px;background:#d8d6d0"></div>
<div style="position:absolute;left:1036px;top:670.0px;width:1px;height:13.6px;background:#d8d6d0"></div>
<div style="position:absolute;left:869.5px;top:671.5999999999999px;height:12px;line-height:12px;font-size:8.6px;color:#000;font-weight:normal;white-space:pre;letter-spacing:-0.15px;">CAN2 terminator</div>
<div style="position:absolute;left:867.5px;top:683.6px;width:169px;height:13.6px;background:#e1f3fc"></div>
<div style="position:absolute;left:1037px;top:683.6px;width:181.5px;height:13.6px;background:#e1f3fc"></div>
<div style="position:absolute;left:867.5px;top:696.7px;width:351px;height:1px;background:#d8d6d0"></div>
<div style="position:absolute;left:1036px;top:683.6px;width:1px;height:13.6px;background:#d8d6d0"></div>
<div style="position:absolute;left:869.5px;top:685.1999999999999px;height:12px;line-height:12px;font-size:8.6px;color:#000;font-weight:normal;white-space:pre;letter-spacing:-0.15px;">CAN2 speed</div>
<div style="position:absolute;left:1039.5px;top:685.1999999999999px;height:12px;line-height:12px;font-size:8.6px;color:#000;font-weight:normal;white-space:pre;letter-spacing:-0.15px;">500 Kbps</div>
<div style="position:absolute;left:867.5px;top:697.2px;width:169px;height:13.6px;background:#e8fadf"></div>
<div style="position:absolute;left:1037px;top:697.2px;width:181.5px;height:13.6px;background:#e8fadf"></div>
<div style="position:absolute;left:867.5px;top:710.3000000000001px;width:351px;height:1px;background:#d8d6d0"></div>
<div style="position:absolute;left:1036px;top:697.2px;width:1px;height:13.6px;background:#d8d6d0"></div>
<div style="position:absolute;left:869.5px;top:698.8px;height:12px;line-height:12px;font-size:8.6px;color:#000;font-weight:normal;white-space:pre;letter-spacing:-0.15px;">GPS CANbus</div>
<div style="position:absolute;left:1039.5px;top:698.8px;height:12px;line-height:12px;font-size:8.6px;color:#000;font-weight:normal;white-space:pre;letter-spacing:-0.15px;">CAN2</div>
<div style="position:absolute;left:867.5px;top:710.8px;width:169px;height:13.6px;background:#e8fa9c"></div>
<div style="position:absolute;left:1037px;top:710.8px;width:181.5px;height:13.6px;background:#e8fa9c"></div>
<div style="position:absolute;left:867.5px;top:723.9px;width:351px;height:1px;background:#d8d6d0"></div>
<div style="position:absolute;left:1036px;top:710.8px;width:1px;height:13.6px;background:#d8d6d0"></div>
<div style="position:absolute;left:869.5px;top:712.3999999999999px;height:12px;line-height:12px;font-size:8.6px;color:#000;font-weight:normal;white-space:pre;letter-spacing:-0.15px;">Tire temperature cameras CANbus</div>
<div style="position:absolute;left:1039.5px;top:712.3999999999999px;height:12px;line-height:12px;font-size:8.6px;color:#000;font-weight:normal;white-space:pre;letter-spacing:-0.15px;">CAN2</div>
<div style="position:absolute;left:867.5px;top:724.4px;width:169px;height:13.6px;background:#e8fa9c"></div>
<div style="position:absolute;left:1037px;top:724.4px;width:181.5px;height:13.6px;background:#e8fa9c"></div>
<div style="position:absolute;left:867.5px;top:737.5px;width:351px;height:1px;background:#d8d6d0"></div>
<div style="position:absolute;left:1036px;top:724.4px;width:1px;height:13.6px;background:#d8d6d0"></div>
<div style="position:absolute;left:869.5px;top:725.9999999999999px;height:12px;line-height:12px;font-size:8.6px;color:#000;font-weight:normal;white-space:pre;letter-spacing:-0.15px;">Tire temperature cameras base ID</div>
<div style="position:absolute;left:1039.5px;top:725.9999999999999px;height:12px;line-height:12px;font-size:8.6px;color:#000;font-weight:normal;white-space:pre;letter-spacing:-0.15px;">408</div>
<div style="position:absolute;left:867.5px;top:738.0px;width:169px;height:13.6px;background:#fcfde0"></div>
<div style="position:absolute;left:1037px;top:738.0px;width:181.5px;height:13.6px;background:#fcfde0"></div>
<div style="position:absolute;left:867.5px;top:751.1px;width:351px;height:1px;background:#d8d6d0"></div>
<div style="position:absolute;left:1036px;top:738.0px;width:1px;height:13.6px;background:#d8d6d0"></div>
<div style="position:absolute;left:869.5px;top:739.5999999999999px;height:12px;line-height:12px;font-size:8.6px;color:#000;font-weight:normal;white-space:pre;letter-spacing:-0.15px;">Serial protocol</div>
<div style="position:absolute;left:1039.5px;top:739.5999999999999px;height:12px;line-height:12px;font-size:8.6px;color:#000;font-weight:normal;white-space:pre;letter-spacing:-0.15px;">Ecumaster serial protocol</div>
<div style="position:absolute;left:1039.5px;top:673px;width:10.5px;height:10px;background:#fff;border:1px solid #000"></div>
<svg style="left:1041px;top:675px" width="8" height="7"><path d="M0.8 3.2L3 5.5L7.2 1" fill="none" stroke="#000" stroke-width="1.6"/></svg>
<div style="position:absolute;left:1223px;top:70px;width:218px;height:14px;background:#808080"></div><svg style="left:1227px;top:71px" width="10" height="12"><path d="M0.5 1.5L7 0.5L9.5 2V11.5L3 12L0.5 10.5z" fill="#e8e4e0" stroke="#b0a8a0" stroke-width="0.8"/><path d="M2 3L7 2.5" stroke="#d09080"/></svg><div style="position:absolute;left:1240.5px;top:71.3px;height:12px;line-height:12px;font-size:8.3px;color:#cfcfcf;font-weight:normal;white-space:pre;">ECU</div>
<div style="position:absolute;left:1223px;top:84px;width:222px;height:1px;background:#e8e6e0"></div>
<div style="position:absolute;left:1223px;top:84.5px;width:217px;height:449px;border-top:1px solid #404040;border-left:1px solid #404040;background:#fff"></div>
<div style="position:absolute;left:1224px;top:85px;width:216px;height:12px;background:#d4d0c8"></div><div style="position:absolute;left:1224px;top:85px;width:90px;height:12px;box-sizing:border-box;background:#d4d0c8;border-top:1px solid #fff;border-left:1px solid #fff;border-right:1px solid #404040;border-bottom:1px solid #404040;box-shadow:inset -1px -1px 0 #808080;"></div><div style="position:absolute;left:1227.5px;top:85.8px;height:12px;line-height:12px;font-size:8.6px;color:#000;font-weight:normal;white-space:pre;letter-spacing:-0.15px;">Name</div><div style="position:absolute;left:1314px;top:85px;width:75px;height:12px;box-sizing:border-box;background:#d4d0c8;border-top:1px solid #fff;border-left:1px solid #fff;border-right:1px solid #404040;border-bottom:1px solid #404040;box-shadow:inset -1px -1px 0 #808080;"></div><div style="position:absolute;left:1317.5px;top:85.8px;height:12px;line-height:12px;font-size:8.6px;color:#000;font-weight:normal;white-space:pre;letter-spacing:-0.15px;">Value</div><div style="position:absolute;left:1389px;top:85px;width:37.5px;height:12px;box-sizing:border-box;background:#d4d0c8;border-top:1px solid #fff;border-left:1px solid #fff;border-right:1px solid #404040;border-bottom:1px solid #404040;box-shadow:inset -1px -1px 0 #808080;"></div><div style="position:absolute;left:1392.5px;top:85.8px;height:12px;line-height:12px;font-size:8.6px;color:#000;font-weight:normal;white-space:pre;letter-spacing:-0.15px;">Unit</div><div style="position:absolute;left:1224px;top:97px;width:216px;height:435px;overflow:hidden"><div style="position:absolute;left:-1224px;top:-97px;width:1445px;height:778px"><div style="position:absolute;left:1224px;top:97px;width:202.5px;height:435px;background:#fff"></div><div style="position:absolute;left:1227px;top:97.9px;width:199.5px;height:12.76px;background:#fde4dc"></div><div style="position:absolute;left:1224px;top:109.66000000000001px;width:202.5px;height:1px;background:#e4dcd6"></div><div style="position:absolute;left:1228.5px;top:98.98px;height:12px;line-height:12px;font-size:8.6px;color:#000;font-weight:normal;white-space:pre;letter-spacing:-0.15px;">ecu.rpm</div><div style="position:absolute;left:1318.5px;top:98.98px;height:12px;line-height:12px;font-size:8.6px;color:#000;font-weight:normal;white-space:pre;letter-spacing:-0.15px;">4625</div><div style="position:absolute;left:1393.5px;top:98.98px;height:12px;line-height:12px;font-size:8.6px;color:#000;font-weight:normal;white-space:pre;letter-spacing:-0.15px;">rpm</div><div style="position:absolute;left:1227px;top:110.66000000000001px;width:199.5px;height:12.76px;background:#fde4dc"></div><div style="position:absolute;left:1224px;top:122.42000000000002px;width:202.5px;height:1px;background:#e4dcd6"></div><div style="position:absolute;left:1228.5px;top:111.74000000000001px;height:12px;line-height:12px;font-size:8.6px;color:#000;font-weight:normal;white-space:pre;letter-spacing:-0.15px;">ecu.gear</div><div style="position:absolute;left:1318.5px;top:111.74000000000001px;height:12px;line-height:12px;font-size:8.6px;color:#000;font-weight:normal;white-space:pre;letter-spacing:-0.15px;">0</div><div style="position:absolute;left:1227px;top:123.42px;width:199.5px;height:12.76px;background:#fde4dc"></div><div style="position:absolute;left:1224px;top:135.18px;width:202.5px;height:1px;background:#e4dcd6"></div><div style="position:absolute;left:1228.5px;top:124.5px;height:12px;line-height:12px;font-size:8.6px;color:#000;font-weight:normal;white-space:pre;letter-spacing:-0.15px;">ecu.tps</div><div style="position:absolute;left:1318.5px;top:124.5px;height:12px;line-height:12px;font-size:8.6px;color:#000;font-weight:normal;white-space:pre;letter-spacing:-0.15px;">8,5</div><div style="position:absolute;left:1393.5px;top:124.5px;height:12px;line-height:12px;font-size:8.6px;color:#000;font-weight:normal;white-space:pre;letter-spacing:-0.15px;">%</div><div style="position:absolute;left:1227px;top:136.18px;width:199.5px;height:12.76px;background:#fde4dc"></div><div style="position:absolute;left:1224px;top:147.94px;width:202.5px;height:1px;background:#e4dcd6"></div><div style="position:absolute;left:1228.5px;top:137.26px;height:12px;line-height:12px;font-size:8.6px;color:#000;font-weight:normal;white-space:pre;letter-spacing:-0.15px;">ecu.map</div><div style="position:absolute;left:1318.5px;top:137.26px;height:12px;line-height:12px;font-size:8.6px;color:#000;font-weight:normal;white-space:pre;letter-spacing:-0.15px;">64,0</div><div style="position:absolute;left:1393.5px;top:137.26px;height:12px;line-height:12px;font-size:8.6px;color:#000;font-weight:normal;white-space:pre;letter-spacing:-0.15px;">kPa</div><div style="position:absolute;left:1227px;top:148.94px;width:199.5px;height:12.76px;background:#fde4dc"></div><div style="position:absolute;left:1224px;top:160.7px;width:202.5px;height:1px;background:#e4dcd6"></div><div style="position:absolute;left:1228.5px;top:150.01999999999998px;height:12px;line-height:12px;font-size:8.6px;color:#000;font-weight:normal;white-space:pre;letter-spacing:-0.15px;">ecu.mgp</div><div style="position:absolute;left:1318.5px;top:150.01999999999998px;height:12px;line-height:12px;font-size:8.6px;color:#000;font-weight:normal;white-space:pre;letter-spacing:-0.15px;">0,0</div><div style="position:absolute;left:1393.5px;top:150.01999999999998px;height:12px;line-height:12px;font-size:8.6px;color:#000;font-weight:normal;white-space:pre;letter-spacing:-0.15px;">kPa</div><div style="position:absolute;left:1227px;top:161.7px;width:199.5px;height:12.76px;background:#fde4dc"></div><div style="position:absolute;left:1224px;top:173.45999999999998px;width:202.5px;height:1px;background:#e4dcd6"></div><div style="position:absolute;left:1228.5px;top:162.77999999999997px;height:12px;line-height:12px;font-size:8.6px;color:#000;font-weight:normal;white-space:pre;letter-spacing:-0.15px;">ecu.boost</div><div style="position:absolute;left:1318.5px;top:162.77999999999997px;height:12px;line-height:12px;font-size:8.6px;color:#000;font-weight:normal;white-space:pre;letter-spacing:-0.15px;">-0,36</div><div style="position:absolute;left:1393.5px;top:162.77999999999997px;height:12px;line-height:12px;font-size:8.6px;color:#000;font-weight:normal;white-space:pre;letter-spacing:-0.15px;">bar</div><div style="position:absolute;left:1227px;top:174.46px;width:199.5px;height:12.76px;background:#fde4dc"></div><div style="position:absolute;left:1224px;top:186.22px;width:202.5px;height:1px;background:#e4dcd6"></div><div style="position:absolute;left:1228.5px;top:175.54px;height:12px;line-height:12px;font-size:8.6px;color:#000;font-weight:normal;white-space:pre;letter-spacing:-0.15px;">ecu.baro</div><div style="position:absolute;left:1318.5px;top:175.54px;height:12px;line-height:12px;font-size:8.6px;color:#000;font-weight:normal;white-space:pre;letter-spacing:-0.15px;">0,0</div><div style="position:absolute;left:1393.5px;top:175.54px;height:12px;line-height:12px;font-size:8.6px;color:#000;font-weight:normal;white-space:pre;letter-spacing:-0.15px;">kPa</div><div style="position:absolute;left:1227px;top:187.22px;width:199.5px;height:12.76px;background:#fde4dc"></div><div style="position:absolute;left:1224px;top:198.98px;width:202.5px;height:1px;background:#e4dcd6"></div><div style="position:absolute;left:1228.5px;top:188.29999999999998px;height:12px;line-height:12px;font-size:8.6px;color:#000;font-weight:normal;white-space:pre;letter-spacing:-0.15px;">ecu.clt</div><div style="position:absolute;left:1318.5px;top:188.29999999999998px;height:12px;line-height:12px;font-size:8.6px;color:#000;font-weight:normal;white-space:pre;letter-spacing:-0.15px;">96,0</div><div style="position:absolute;left:1393.5px;top:188.29999999999998px;height:12px;line-height:12px;font-size:8.6px;color:#000;font-weight:normal;white-space:pre;letter-spacing:-0.15px;">&#176;C</div><div style="position:absolute;left:1227px;top:199.98000000000002px;width:199.5px;height:12.76px;background:#fde4dc"></div><div style="position:absolute;left:1224px;top:211.74px;width:202.5px;height:1px;background:#e4dcd6"></div><div style="position:absolute;left:1228.5px;top:201.06px;height:12px;line-height:12px;font-size:8.6px;color:#000;font-weight:normal;white-space:pre;letter-spacing:-0.15px;">ecu.iat</div><div style="position:absolute;left:1318.5px;top:201.06px;height:12px;line-height:12px;font-size:8.6px;color:#000;font-weight:normal;white-space:pre;letter-spacing:-0.15px;">-96,0</div><div style="position:absolute;left:1393.5px;top:201.06px;height:12px;line-height:12px;font-size:8.6px;color:#000;font-weight:normal;white-space:pre;letter-spacing:-0.15px;">&#176;C</div><div style="position:absolute;left:1227px;top:212.74px;width:199.5px;height:12.76px;background:#fde4dc"></div><div style="position:absolute;left:1224px;top:224.5px;width:202.5px;height:1px;background:#e4dcd6"></div><div style="position:absolute;left:1228.5px;top:213.82px;height:12px;line-height:12px;font-size:8.6px;color:#000;font-weight:normal;white-space:pre;letter-spacing:-0.15px;">ecu.speed</div><div style="position:absolute;left:1318.5px;top:213.82px;height:12px;line-height:12px;font-size:8.6px;color:#000;font-weight:normal;white-space:pre;letter-spacing:-0.15px;">135,0</div><div style="position:absolute;left:1393.5px;top:213.82px;height:12px;line-height:12px;font-size:8.6px;color:#000;font-weight:normal;white-space:pre;letter-spacing:-0.15px;">km/h</div><div style="position:absolute;left:1227px;top:225.5px;width:199.5px;height:12.76px;background:#fde4dc"></div><div style="position:absolute;left:1224px;top:237.26px;width:202.5px;height:1px;background:#e4dcd6"></div><div style="position:absolute;left:1228.5px;top:226.57999999999998px;height:12px;line-height:12px;font-size:8.6px;color:#000;font-weight:normal;white-space:pre;letter-spacing:-0.15px;">ecu.battery</div><div style="position:absolute;left:1318.5px;top:226.57999999999998px;height:12px;line-height:12px;font-size:8.6px;color:#000;font-weight:normal;white-space:pre;letter-spacing:-0.15px;">13,39</div><div style="position:absolute;left:1393.5px;top:226.57999999999998px;height:12px;line-height:12px;font-size:8.6px;color:#000;font-weight:normal;white-space:pre;letter-spacing:-0.15px;">V</div><div style="position:absolute;left:1227px;top:238.26px;width:199.5px;height:12.76px;background:#fde4dc"></div><div style="position:absolute;left:1224px;top:250.01999999999998px;width:202.5px;height:1px;background:#e4dcd6"></div><div style="position:absolute;left:1228.5px;top:239.33999999999997px;height:12px;line-height:12px;font-size:8.6px;color:#000;font-weight:normal;white-space:pre;letter-spacing:-0.15px;">ecu.egt1</div><div style="position:absolute;left:1318.5px;top:239.33999999999997px;height:12px;line-height:12px;font-size:8.6px;color:#000;font-weight:normal;white-space:pre;letter-spacing:-0.15px;">769</div><div style="position:absolute;left:1393.5px;top:239.33999999999997px;height:12px;line-height:12px;font-size:8.6px;color:#000;font-weight:normal;white-space:pre;letter-spacing:-0.15px;">&#176;C</div><div style="position:absolute;left:1227px;top:251.02px;width:199.5px;height:12.76px;background:#fde4dc"></div><div style="position:absolute;left:1224px;top:262.78000000000003px;width:202.5px;height:1px;background:#e4dcd6"></div><div style="position:absolute;left:1228.5px;top:252.10000000000002px;height:12px;line-height:12px;font-size:8.6px;color:#000;font-weight:normal;white-space:pre;letter-spacing:-0.15px;">ecu.egt2</div><div style="position:absolute;left:1318.5px;top:252.10000000000002px;height:12px;line-height:12px;font-size:8.6px;color:#000;font-weight:normal;white-space:pre;letter-spacing:-0.15px;">0</div><div style="position:absolute;left:1393.5px;top:252.10000000000002px;height:12px;line-height:12px;font-size:8.6px;color:#000;font-weight:normal;white-space:pre;letter-spacing:-0.15px;">&#176;C</div><div style="position:absolute;left:1227px;top:263.78px;width:199.5px;height:12.76px;background:#fde4dc"></div><div style="position:absolute;left:1224px;top:275.53999999999996px;width:202.5px;height:1px;background:#e4dcd6"></div><div style="position:absolute;left:1228.5px;top:264.85999999999996px;height:12px;line-height:12px;font-size:8.6px;color:#000;font-weight:normal;white-space:pre;letter-spacing:-0.15px;">ecu.egt3</div><div style="position:absolute;left:1318.5px;top:264.85999999999996px;height:12px;line-height:12px;font-size:8.6px;color:#000;font-weight:normal;white-space:pre;letter-spacing:-0.15px;">0</div><div style="position:absolute;left:1393.5px;top:264.85999999999996px;height:12px;line-height:12px;font-size:8.6px;color:#000;font-weight:normal;white-space:pre;letter-spacing:-0.15px;">&#176;C</div><div style="position:absolute;left:1227px;top:276.53999999999996px;width:199.5px;height:12.76px;background:#fde4dc"></div><div style="position:absolute;left:1224px;top:288.29999999999995px;width:202.5px;height:1px;background:#e4dcd6"></div><div style="position:absolute;left:1228.5px;top:277.61999999999995px;height:12px;line-height:12px;font-size:8.6px;color:#000;font-weight:normal;white-space:pre;letter-spacing:-0.15px;">ecu.egt4</div><div style="position:absolute;left:1318.5px;top:277.61999999999995px;height:12px;line-height:12px;font-size:8.6px;color:#000;font-weight:normal;white-space:pre;letter-spacing:-0.15px;">0</div><div style="position:absolute;left:1393.5px;top:277.61999999999995px;height:12px;line-height:12px;font-size:8.6px;color:#000;font-weight:normal;white-space:pre;letter-spacing:-0.15px;">&#176;C</div><div style="position:absolute;left:1227px;top:289.3px;width:199.5px;height:12.76px;background:#fde4dc"></div><div style="position:absolute;left:1224px;top:301.06px;width:202.5px;height:1px;background:#e4dcd6"></div><div style="position:absolute;left:1228.5px;top:290.38px;height:12px;line-height:12px;font-size:8.6px;color:#000;font-weight:normal;white-space:pre;letter-spacing:-0.15px;">ecu.analog1</div><div style="position:absolute;left:1318.5px;top:290.38px;height:12px;line-height:12px;font-size:8.6px;color:#000;font-weight:normal;white-space:pre;letter-spacing:-0.15px;">0,000</div><div style="position:absolute;left:1393.5px;top:290.38px;height:12px;line-height:12px;font-size:8.6px;color:#000;font-weight:normal;white-space:pre;letter-spacing:-0.15px;">V</div><div style="position:absolute;left:1227px;top:302.06px;width:199.5px;height:12.76px;background:#fde4dc"></div><div style="position:absolute;left:1224px;top:313.82px;width:202.5px;height:1px;background:#e4dcd6"></div><div style="position:absolute;left:1228.5px;top:303.14px;height:12px;line-height:12px;font-size:8.6px;color:#000;font-weight:normal;white-space:pre;letter-spacing:-0.15px;">ecu.analog2</div><div style="position:absolute;left:1318.5px;top:303.14px;height:12px;line-height:12px;font-size:8.6px;color:#000;font-weight:normal;white-space:pre;letter-spacing:-0.15px;">0,000</div><div style="position:absolute;left:1393.5px;top:303.14px;height:12px;line-height:12px;font-size:8.6px;color:#000;font-weight:normal;white-space:pre;letter-spacing:-0.15px;">V</div><div style="position:absolute;left:1227px;top:314.82px;width:199.5px;height:12.76px;background:#fde4dc"></div><div style="position:absolute;left:1224px;top:326.58px;width:202.5px;height:1px;background:#e4dcd6"></div><div style="position:absolute;left:1228.5px;top:315.9px;height:12px;line-height:12px;font-size:8.6px;color:#000;font-weight:normal;white-space:pre;letter-spacing:-0.15px;">ecu.analog3</div><div style="position:absolute;left:1318.5px;top:315.9px;height:12px;line-height:12px;font-size:8.6px;color:#000;font-weight:normal;white-space:pre;letter-spacing:-0.15px;">0,000</div><div style="position:absolute;left:1393.5px;top:315.9px;height:12px;line-height:12px;font-size:8.6px;color:#000;font-weight:normal;white-space:pre;letter-spacing:-0.15px;">V</div><div style="position:absolute;left:1227px;top:327.58000000000004px;width:199.5px;height:12.76px;background:#fde4dc"></div><div style="position:absolute;left:1224px;top:339.34000000000003px;width:202.5px;height:1px;background:#e4dcd6"></div><div style="position:absolute;left:1228.5px;top:328.66px;height:12px;line-height:12px;font-size:8.6px;color:#000;font-weight:normal;white-space:pre;letter-spacing:-0.15px;">ecu.analog4</div><div style="position:absolute;left:1318.5px;top:328.66px;height:12px;line-height:12px;font-size:8.6px;color:#000;font-weight:normal;white-space:pre;letter-spacing:-0.15px;">0,000</div><div style="position:absolute;left:1393.5px;top:328.66px;height:12px;line-height:12px;font-size:8.6px;color:#000;font-weight:normal;white-space:pre;letter-spacing:-0.15px;">V</div><div style="position:absolute;left:1227px;top:340.34000000000003px;width:199.5px;height:12.76px;background:#fde4dc"></div><div style="position:absolute;left:1224px;top:352.1px;width:202.5px;height:1px;background:#e4dcd6"></div><div style="position:absolute;left:1228.5px;top:341.42px;height:12px;line-height:12px;font-size:8.6px;color:#000;font-weight:normal;white-space:pre;letter-spacing:-0.15px;">ecu.analog5</div><div style="position:absolute;left:1318.5px;top:341.42px;height:12px;line-height:12px;font-size:8.6px;color:#000;font-weight:normal;white-space:pre;letter-spacing:-0.15px;">0,000</div><div style="position:absolute;left:1393.5px;top:341.42px;height:12px;line-height:12px;font-size:8.6px;color:#000;font-weight:normal;white-space:pre;letter-spacing:-0.15px;">V</div><div style="position:absolute;left:1227px;top:353.1px;width:199.5px;height:12.76px;background:#fde4dc"></div><div style="position:absolute;left:1224px;top:364.86px;width:202.5px;height:1px;background:#e4dcd6"></div><div style="position:absolute;left:1228.5px;top:354.18px;height:12px;line-height:12px;font-size:8.6px;color:#000;font-weight:normal;white-space:pre;letter-spacing:-0.15px;">ecu.analog6</div><div style="position:absolute;left:1318.5px;top:354.18px;height:12px;line-height:12px;font-size:8.6px;color:#000;font-weight:normal;white-space:pre;letter-spacing:-0.15px;">0,000</div><div style="position:absolute;left:1393.5px;top:354.18px;height:12px;line-height:12px;font-size:8.6px;color:#000;font-weight:normal;white-space:pre;letter-spacing:-0.15px;">V</div><div style="position:absolute;left:1227px;top:365.86px;width:199.5px;height:12.76px;background:#fde4dc"></div><div style="position:absolute;left:1224px;top:377.62px;width:202.5px;height:1px;background:#e4dcd6"></div><div style="position:absolute;left:1228.5px;top:366.94px;height:12px;line-height:12px;font-size:8.6px;color:#000;font-weight:normal;white-space:pre;letter-spacing:-0.15px;">ecu.analog7</div><div style="position:absolute;left:1318.5px;top:366.94px;height:12px;line-height:12px;font-size:8.6px;color:#000;font-weight:normal;white-space:pre;letter-spacing:-0.15px;">0,000</div><div style="position:absolute;left:1393.5px;top:366.94px;height:12px;line-height:12px;font-size:8.6px;color:#000;font-weight:normal;white-space:pre;letter-spacing:-0.15px;">V</div><div style="position:absolute;left:1227px;top:378.62px;width:199.5px;height:12.76px;background:#fde4dc"></div><div style="position:absolute;left:1224px;top:390.38px;width:202.5px;height:1px;background:#e4dcd6"></div><div style="position:absolute;left:1228.5px;top:379.7px;height:12px;line-height:12px;font-size:8.6px;color:#000;font-weight:normal;white-space:pre;letter-spacing:-0.15px;">ecu.analog8</div><div style="position:absolute;left:1318.5px;top:379.7px;height:12px;line-height:12px;font-size:8.6px;color:#000;font-weight:normal;white-space:pre;letter-spacing:-0.15px;">0,000</div><div style="position:absolute;left:1393.5px;top:379.7px;height:12px;line-height:12px;font-size:8.6px;color:#000;font-weight:normal;white-space:pre;letter-spacing:-0.15px;">V</div><div style="position:absolute;left:1227px;top:391.38px;width:199.5px;height:12.76px;background:#fde4dc"></div><div style="position:absolute;left:1224px;top:403.14px;width:202.5px;height:1px;background:#e4dcd6"></div><div style="position:absolute;left:1228.5px;top:392.46px;height:12px;line-height:12px;font-size:8.6px;color:#000;font-weight:normal;white-space:pre;letter-spacing:-0.15px;">ecu.ignAngle</div><div style="position:absolute;left:1318.5px;top:392.46px;height:12px;line-height:12px;font-size:8.6px;color:#000;font-weight:normal;white-space:pre;letter-spacing:-0.15px;">0,0</div><div style="position:absolute;left:1393.5px;top:392.46px;height:12px;line-height:12px;font-size:8.6px;color:#000;font-weight:normal;white-space:pre;letter-spacing:-0.15px;">&#176;BTDC</div><div style="position:absolute;left:1227px;top:404.14px;width:199.5px;height:12.76px;background:#fde4dc"></div><div style="position:absolute;left:1224px;top:415.9px;width:202.5px;height:1px;background:#e4dcd6"></div><div style="position:absolute;left:1228.5px;top:405.21999999999997px;height:12px;line-height:12px;font-size:8.6px;color:#000;font-weight:normal;white-space:pre;letter-spacing:-0.15px;">ecu.ignDwell</div><div style="position:absolute;left:1318.5px;top:405.21999999999997px;height:12px;line-height:12px;font-size:8.6px;color:#000;font-weight:normal;white-space:pre;letter-spacing:-0.15px;">0,00</div><div style="position:absolute;left:1393.5px;top:405.21999999999997px;height:12px;line-height:12px;font-size:8.6px;color:#000;font-weight:normal;white-space:pre;letter-spacing:-0.15px;">ms</div><div style="position:absolute;left:1227px;top:416.9px;width:199.5px;height:12.76px;background:#fde4dc"></div><div style="position:absolute;left:1224px;top:428.65999999999997px;width:202.5px;height:1px;background:#e4dcd6"></div><div style="position:absolute;left:1228.5px;top:417.97999999999996px;height:12px;line-height:12px;font-size:8.6px;color:#000;font-weight:normal;white-space:pre;letter-spacing:-0.15px;">ecu.injPW</div><div style="position:absolute;left:1318.5px;top:417.97999999999996px;height:12px;line-height:12px;font-size:8.6px;color:#000;font-weight:normal;white-space:pre;letter-spacing:-0.15px;">0,00</div><div style="position:absolute;left:1393.5px;top:417.97999999999996px;height:12px;line-height:12px;font-size:8.6px;color:#000;font-weight:normal;white-space:pre;letter-spacing:-0.15px;">ms</div><div style="position:absolute;left:1227px;top:429.65999999999997px;width:199.5px;height:12.76px;background:#fde4dc"></div><div style="position:absolute;left:1224px;top:441.41999999999996px;width:202.5px;height:1px;background:#e4dcd6"></div><div style="position:absolute;left:1228.5px;top:430.73999999999995px;height:12px;line-height:12px;font-size:8.6px;color:#000;font-weight:normal;white-space:pre;letter-spacing:-0.15px;">ecu.injDC</div><div style="position:absolute;left:1318.5px;top:430.73999999999995px;height:12px;line-height:12px;font-size:8.6px;color:#000;font-weight:normal;white-space:pre;letter-spacing:-0.15px;">0,0</div><div style="position:absolute;left:1393.5px;top:430.73999999999995px;height:12px;line-height:12px;font-size:8.6px;color:#000;font-weight:normal;white-space:pre;letter-spacing:-0.15px;">%</div><div style="position:absolute;left:1227px;top:442.41999999999996px;width:199.5px;height:12.76px;background:#fde4dc"></div><div style="position:absolute;left:1224px;top:454.17999999999995px;width:202.5px;height:1px;background:#e4dcd6"></div><div style="position:absolute;left:1228.5px;top:443.49999999999994px;height:12px;line-height:12px;font-size:8.6px;color:#000;font-weight:normal;white-space:pre;letter-spacing:-0.15px;">ecu.secInjPW</div><div style="position:absolute;left:1318.5px;top:443.49999999999994px;height:12px;line-height:12px;font-size:8.6px;color:#000;font-weight:normal;white-space:pre;letter-spacing:-0.15px;">0,00</div><div style="position:absolute;left:1393.5px;top:443.49999999999994px;height:12px;line-height:12px;font-size:8.6px;color:#000;font-weight:normal;white-space:pre;letter-spacing:-0.15px;">ms</div><div style="position:absolute;left:1227px;top:455.17999999999995px;width:199.5px;height:12.76px;background:#fde4dc"></div><div style="position:absolute;left:1224px;top:466.93999999999994px;width:202.5px;height:1px;background:#e4dcd6"></div><div style="position:absolute;left:1228.5px;top:456.25999999999993px;height:12px;line-height:12px;font-size:8.6px;color:#000;font-weight:normal;white-space:pre;letter-spacing:-0.15px;">ecu.secInjDC</div><div style="position:absolute;left:1318.5px;top:456.25999999999993px;height:12px;line-height:12px;font-size:8.6px;color:#000;font-weight:normal;white-space:pre;letter-spacing:-0.15px;">0,00</div><div style="position:absolute;left:1393.5px;top:456.25999999999993px;height:12px;line-height:12px;font-size:8.6px;color:#000;font-weight:normal;white-space:pre;letter-spacing:-0.15px;">%</div><div style="position:absolute;left:1227px;top:467.94000000000005px;width:199.5px;height:12.76px;background:#fde4dc"></div><div style="position:absolute;left:1224px;top:479.70000000000005px;width:202.5px;height:1px;background:#e4dcd6"></div><div style="position:absolute;left:1228.5px;top:469.02000000000004px;height:12px;line-height:12px;font-size:8.6px;color:#000;font-weight:normal;white-space:pre;letter-spacing:-0.15px;">ecu.knockLvl</div><div style="position:absolute;left:1318.5px;top:469.02000000000004px;height:12px;line-height:12px;font-size:8.6px;color:#000;font-weight:normal;white-space:pre;letter-spacing:-0.15px;">0,000</div><div style="position:absolute;left:1393.5px;top:469.02000000000004px;height:12px;line-height:12px;font-size:8.6px;color:#000;font-weight:normal;white-space:pre;letter-spacing:-0.15px;">V</div><div style="position:absolute;left:1227px;top:480.70000000000005px;width:199.5px;height:12.76px;background:#fde4dc"></div><div style="position:absolute;left:1224px;top:492.46000000000004px;width:202.5px;height:1px;background:#e4dcd6"></div><div style="position:absolute;left:1228.5px;top:481.78000000000003px;height:12px;line-height:12px;font-size:8.6px;color:#000;font-weight:normal;white-space:pre;letter-spacing:-0.15px;">ecu.lambda1</div><div style="position:absolute;left:1318.5px;top:481.78000000000003px;height:12px;line-height:12px;font-size:8.6px;color:#000;font-weight:normal;white-space:pre;letter-spacing:-0.15px;">0,000</div><div style="position:absolute;left:1393.5px;top:481.78000000000003px;height:12px;line-height:12px;font-size:8.6px;color:#000;font-weight:normal;white-space:pre;letter-spacing:-0.15px;">lambda</div><div style="position:absolute;left:1227px;top:493.46000000000004px;width:199.5px;height:12.76px;background:#fde4dc"></div><div style="position:absolute;left:1224px;top:505.22px;width:202.5px;height:1px;background:#e4dcd6"></div><div style="position:absolute;left:1228.5px;top:494.54px;height:12px;line-height:12px;font-size:8.6px;color:#000;font-weight:normal;white-space:pre;letter-spacing:-0.15px;">ecu.lambda2</div><div style="position:absolute;left:1318.5px;top:494.54px;height:12px;line-height:12px;font-size:8.6px;color:#000;font-weight:normal;white-space:pre;letter-spacing:-0.15px;">0,000</div><div style="position:absolute;left:1393.5px;top:494.54px;height:12px;line-height:12px;font-size:8.6px;color:#000;font-weight:normal;white-space:pre;letter-spacing:-0.15px;">lambda</div><div style="position:absolute;left:1227px;top:506.22px;width:199.5px;height:12.76px;background:#fde4dc"></div><div style="position:absolute;left:1224px;top:517.98px;width:202.5px;height:1px;background:#e4dcd6"></div><div style="position:absolute;left:1228.5px;top:507.30000000000007px;height:12px;line-height:12px;font-size:8.6px;color:#000;font-weight:normal;white-space:pre;letter-spacing:-0.15px;">ecu.lambda1Trgt</div><div style="position:absolute;left:1318.5px;top:507.30000000000007px;height:12px;line-height:12px;font-size:8.6px;color:#000;font-weight:normal;white-space:pre;letter-spacing:-0.15px;">0,000</div><div style="position:absolute;left:1393.5px;top:507.30000000000007px;height:12px;line-height:12px;font-size:8.6px;color:#000;font-weight:normal;white-space:pre;letter-spacing:-0.15px;">lambda</div><div style="position:absolute;left:1227px;top:518.98px;width:199.5px;height:12.76px;background:#fde4dc"></div><div style="position:absolute;left:1224px;top:530.74px;width:202.5px;height:1px;background:#e4dcd6"></div><div style="position:absolute;left:1228.5px;top:520.0600000000001px;height:12px;line-height:12px;font-size:8.6px;color:#000;font-weight:normal;white-space:pre;letter-spacing:-0.15px;">ecu.lambda2Trgt</div><div style="position:absolute;left:1318.5px;top:520.0600000000001px;height:12px;line-height:12px;font-size:8.6px;color:#000;font-weight:normal;white-space:pre;letter-spacing:-0.15px;">0,000</div><div style="position:absolute;left:1393.5px;top:520.0600000000001px;height:12px;line-height:12px;font-size:8.6px;color:#000;font-weight:normal;white-space:pre;letter-spacing:-0.15px;">lambda</div><div style="position:absolute;left:1314px;top:97px;width:1px;height:433.84px;background:#e4dcd6"></div><div style="position:absolute;left:1389px;top:97px;width:1px;height:433.84px;background:#e4dcd6"></div></div></div>
<div style="position:absolute;left:1426.5px;top:85px;width:13px;height:447px;background:#ece9e6"></div>
<div style="position:absolute;left:1427px;top:85px;width:12px;height:11.5px;box-sizing:border-box;background:#d4d0c8;border-top:1px solid #fff;border-left:1px solid #fff;border-right:1px solid #404040;border-bottom:1px solid #404040;box-shadow:inset -1px -1px 0 #808080;"></div>
<svg style="left:1430px;top:88.5px" width="6" height="4"><path d="M3 0L6 4H0z" fill="#000"/></svg>
<div style="position:absolute;left:1427px;top:97px;width:12px;height:136px;box-sizing:border-box;background:#d4d0c8;border-top:1px solid #fff;border-left:1px solid #fff;border-right:1px solid #404040;border-bottom:1px solid #404040;box-shadow:inset -1px -1px 0 #808080;"></div>
<div style="position:absolute;left:1427px;top:519.5px;width:12px;height:11.5px;box-sizing:border-box;background:#d4d0c8;border-top:1px solid #fff;border-left:1px solid #fff;border-right:1px solid #404040;border-bottom:1px solid #404040;box-shadow:inset -1px -1px 0 #808080;"></div>
<svg style="left:1430px;top:523.5px" width="6" height="4"><path d="M0 0H6L3 4z" fill="#000"/></svg>
<div style="position:absolute;left:1439.5px;top:70px;width:5.5px;height:695px;background:#d4d0c8"></div>
<div style="position:absolute;left:1223px;top:532px;width:222px;height:4px;background:#d4d0c8"></div>
<div style="position:absolute;left:1223px;top:536px;width:218px;height:13.5px;background:#808080"></div><svg style="left:1228px;top:538px" width="9" height="10"><path d="M1 9L7 1" stroke="#a0a0a0" stroke-width="1.4"/></svg><div style="position:absolute;left:1240.5px;top:537.05px;height:12px;line-height:12px;font-size:8.3px;color:#cfcfcf;font-weight:normal;white-space:pre;">Variables Inspector</div>
<div style="position:absolute;left:1223px;top:549.5px;width:222px;height:2px;background:#d4d0c8"></div>
<div style="position:absolute;left:1223px;top:551px;width:217px;height:123px;border-top:1px solid #404040;border-left:1px solid #404040;background:#fff"></div>
<div style="position:absolute;left:1224px;top:552px;width:216px;height:12px;background:#d4d0c8"></div><div style="position:absolute;left:1224px;top:552px;width:89.70000000000005px;height:12px;box-sizing:border-box;background:#d4d0c8;border-top:1px solid #fff;border-left:1px solid #fff;border-right:1px solid #404040;border-bottom:1px solid #404040;box-shadow:inset -1px -1px 0 #808080;"></div><div style="position:absolute;left:1227.5px;top:552.8px;height:12px;line-height:12px;font-size:8.6px;color:#000;font-weight:normal;white-space:pre;letter-spacing:-0.15px;">Name</div><div style="position:absolute;left:1313.7px;top:552px;width:74.89999999999986px;height:12px;box-sizing:border-box;background:#d4d0c8;border-top:1px solid #fff;border-left:1px solid #fff;border-right:1px solid #404040;border-bottom:1px solid #404040;box-shadow:inset -1px -1px 0 #808080;"></div><div style="position:absolute;left:1317.2px;top:552.8px;height:12px;line-height:12px;font-size:8.6px;color:#000;font-weight:normal;white-space:pre;letter-spacing:-0.15px;">Value</div><div style="position:absolute;left:1388.6px;top:552px;width:37.200000000000045px;height:12px;box-sizing:border-box;background:#d4d0c8;border-top:1px solid #fff;border-left:1px solid #fff;border-right:1px solid #404040;border-bottom:1px solid #404040;box-shadow:inset -1px -1px 0 #808080;"></div><div style="position:absolute;left:1392.1px;top:552.8px;height:12px;line-height:12px;font-size:8.6px;color:#000;font-weight:normal;white-space:pre;letter-spacing:-0.15px;">Unit</div><div style="position:absolute;left:1425.8px;top:552px;width:13.700000000000045px;height:12px;box-sizing:border-box;background:#d4d0c8;border-top:1px solid #fff;border-left:1px solid #fff;border-right:1px solid #404040;border-bottom:1px solid #404040;box-shadow:inset -1px -1px 0 #808080;"></div><div style="position:absolute;left:1224px;top:564px;width:216px;height:109.5px;overflow:hidden"><div style="position:absolute;left:-1224px;top:-564px;width:1445px;height:778px"><div style="position:absolute;left:1224px;top:564px;width:201.79999999999995px;height:109.5px;background:#fff"></div><div style="position:absolute;left:1227px;top:564.0px;width:198.79999999999995px;height:12.75px;background:#fde4dc"></div><div style="position:absolute;left:1224px;top:575.75px;width:201.79999999999995px;height:1px;background:#e4dcd6"></div><div style="position:absolute;left:1228.5px;top:565.075px;height:12px;line-height:12px;font-size:8.6px;color:#000;font-weight:normal;white-space:pre;letter-spacing:-0.15px;">a_fuelLevel1</div><div style="position:absolute;left:1318.2px;top:565.075px;height:12px;line-height:12px;font-size:8.6px;color:#000;font-weight:normal;white-space:pre;letter-spacing:-0.15px;">  ?</div><div style="position:absolute;left:1227px;top:576.75px;width:198.79999999999995px;height:12.75px;background:#fde4dc"></div><div style="position:absolute;left:1224px;top:588.5px;width:201.79999999999995px;height:1px;background:#e4dcd6"></div><div style="position:absolute;left:1228.5px;top:577.825px;height:12px;line-height:12px;font-size:8.6px;color:#000;font-weight:normal;white-space:pre;letter-spacing:-0.15px;">c_ecu_dbwPos</div><div style="position:absolute;left:1318.2px;top:577.825px;height:12px;line-height:12px;font-size:8.6px;color:#000;font-weight:normal;white-space:pre;letter-spacing:-0.15px;">0,0</div><div style="position:absolute;left:1393.1px;top:577.825px;height:12px;line-height:12px;font-size:8.6px;color:#000;font-weight:normal;white-space:pre;letter-spacing:-0.15px;">%</div><div style="position:absolute;left:1227px;top:589.5px;width:198.79999999999995px;height:12.75px;background:#fde4dc"></div><div style="position:absolute;left:1224px;top:601.25px;width:201.79999999999995px;height:1px;background:#e4dcd6"></div><div style="position:absolute;left:1228.5px;top:590.575px;height:12px;line-height:12px;font-size:8.6px;color:#000;font-weight:normal;white-space:pre;letter-spacing:-0.15px;">c_ecu_dbwTrgt</div><div style="position:absolute;left:1318.2px;top:590.575px;height:12px;line-height:12px;font-size:8.6px;color:#000;font-weight:normal;white-space:pre;letter-spacing:-0.15px;">0,0</div><div style="position:absolute;left:1393.1px;top:590.575px;height:12px;line-height:12px;font-size:8.6px;color:#000;font-weight:normal;white-space:pre;letter-spacing:-0.15px;">%</div><div style="position:absolute;left:1227px;top:602.25px;width:198.79999999999995px;height:12.75px;background:#fde4dc"></div><div style="position:absolute;left:1224px;top:614.0px;width:201.79999999999995px;height:1px;background:#e4dcd6"></div><div style="position:absolute;left:1228.5px;top:603.325px;height:12px;line-height:12px;font-size:8.6px;color:#000;font-weight:normal;white-space:pre;letter-spacing:-0.15px;">c_ecu_tcDrpmRaw</div><div style="position:absolute;left:1318.2px;top:603.325px;height:12px;line-height:12px;font-size:8.6px;color:#000;font-weight:normal;white-space:pre;letter-spacing:-0.15px;">0</div><div style="position:absolute;left:1227px;top:615.0px;width:198.79999999999995px;height:12.75px;background:#fde4dc"></div><div style="position:absolute;left:1224px;top:626.75px;width:201.79999999999995px;height:1px;background:#e4dcd6"></div><div style="position:absolute;left:1228.5px;top:616.075px;height:12px;line-height:12px;font-size:8.6px;color:#000;font-weight:normal;white-space:pre;letter-spacing:-0.15px;">c_ecu_tcDrpm</div><div style="position:absolute;left:1318.2px;top:616.075px;height:12px;line-height:12px;font-size:8.6px;color:#000;font-weight:normal;white-space:pre;letter-spacing:-0.15px;">0,0</div><div style="position:absolute;left:1393.1px;top:616.075px;height:12px;line-height:12px;font-size:8.6px;color:#000;font-weight:normal;white-space:pre;letter-spacing:-0.15px;">bar</div><div style="position:absolute;left:1227px;top:627.75px;width:198.79999999999995px;height:12.75px;background:#fde4dc"></div><div style="position:absolute;left:1224px;top:639.5px;width:201.79999999999995px;height:1px;background:#e4dcd6"></div><div style="position:absolute;left:1228.5px;top:628.825px;height:12px;line-height:12px;font-size:8.6px;color:#000;font-weight:normal;white-space:pre;letter-spacing:-0.15px;">c_ecu_tcTrqRdc</div><div style="position:absolute;left:1318.2px;top:628.825px;height:12px;line-height:12px;font-size:8.6px;color:#000;font-weight:normal;white-space:pre;letter-spacing:-0.15px;">0</div><div style="position:absolute;left:1393.1px;top:628.825px;height:12px;line-height:12px;font-size:8.6px;color:#000;font-weight:normal;white-space:pre;letter-spacing:-0.15px;">%</div><div style="position:absolute;left:1227px;top:640.5px;width:198.79999999999995px;height:12.75px;background:#fde4dc"></div><div style="position:absolute;left:1224px;top:652.25px;width:201.79999999999995px;height:1px;background:#e4dcd6"></div><div style="position:absolute;left:1228.5px;top:641.575px;height:12px;line-height:12px;font-size:8.6px;color:#000;font-weight:normal;white-space:pre;letter-spacing:-0.15px;">c_ecu_pitLTrqRdc</div><div style="position:absolute;left:1318.2px;top:641.575px;height:12px;line-height:12px;font-size:8.6px;color:#000;font-weight:normal;white-space:pre;letter-spacing:-0.15px;">0</div><div style="position:absolute;left:1393.1px;top:641.575px;height:12px;line-height:12px;font-size:8.6px;color:#000;font-weight:normal;white-space:pre;letter-spacing:-0.15px;">%</div><div style="position:absolute;left:1227px;top:653.25px;width:198.79999999999995px;height:12.75px;background:#fde4dc"></div><div style="position:absolute;left:1224px;top:665.0px;width:201.79999999999995px;height:1px;background:#e4dcd6"></div><div style="position:absolute;left:1228.5px;top:654.325px;height:12px;line-height:12px;font-size:8.6px;color:#000;font-weight:normal;white-space:pre;letter-spacing:-0.15px;">f_isGPSValid</div><div style="position:absolute;left:1318.2px;top:654.325px;height:12px;line-height:12px;font-size:8.6px;color:#000;font-weight:normal;white-space:pre;letter-spacing:-0.15px;">0</div><div style="position:absolute;left:1313.7px;top:564px;width:1px;height:102.0px;background:#e4dcd6"></div><div style="position:absolute;left:1388.6px;top:564px;width:1px;height:102.0px;background:#e4dcd6"></div></div></div>
<div style="position:absolute;left:1223px;top:674px;width:222px;height:3px;background:#d4d0c8"></div>
<div style="position:absolute;left:1223px;top:677px;width:218px;height:14px;background:#0a246a"></div><svg style="left:1227px;top:678px" width="10" height="12"><path d="M0.5 1.5L7 0.5L9.5 2V11.5L3 12L0.5 10.5z" fill="#e8e4e0" stroke="#b0a8a0" stroke-width="0.8"/><path d="M2 3L7 2.5" stroke="#d09080"/></svg><div style="position:absolute;left:1240.5px;top:678.3px;height:12px;line-height:12px;font-size:8.3px;color:#fff;font-weight:normal;white-space:pre;">ADU</div>
<div style="position:absolute;left:1223px;top:691px;width:222px;height:2px;background:#d4d0c8"></div>
<div style="position:absolute;left:1223px;top:692.5px;width:217px;height:72px;border-top:1px solid #404040;border-left:1px solid #404040;background:#fff"></div>
<div style="position:absolute;left:1224px;top:693.5px;width:216px;height:12px;background:#d4d0c8"></div><div style="position:absolute;left:1224px;top:693.5px;width:89.70000000000005px;height:12px;box-sizing:border-box;background:#d4d0c8;border-top:1px solid #fff;border-left:1px solid #fff;border-right:1px solid #404040;border-bottom:1px solid #404040;box-shadow:inset -1px -1px 0 #808080;"></div><div style="position:absolute;left:1227.5px;top:694.3px;height:12px;line-height:12px;font-size:8.6px;color:#000;font-weight:normal;white-space:pre;letter-spacing:-0.15px;">Name</div><div style="position:absolute;left:1313.7px;top:693.5px;width:74.89999999999986px;height:12px;box-sizing:border-box;background:#d4d0c8;border-top:1px solid #fff;border-left:1px solid #fff;border-right:1px solid #404040;border-bottom:1px solid #404040;box-shadow:inset -1px -1px 0 #808080;"></div><div style="position:absolute;left:1317.2px;top:694.3px;height:12px;line-height:12px;font-size:8.6px;color:#000;font-weight:normal;white-space:pre;letter-spacing:-0.15px;">Value</div><div style="position:absolute;left:1388.6px;top:693.5px;width:37.200000000000045px;height:12px;box-sizing:border-box;background:#d4d0c8;border-top:1px solid #fff;border-left:1px solid #fff;border-right:1px solid #404040;border-bottom:1px solid #404040;box-shadow:inset -1px -1px 0 #808080;"></div><div style="position:absolute;left:1392.1px;top:694.3px;height:12px;line-height:12px;font-size:8.6px;color:#000;font-weight:normal;white-space:pre;letter-spacing:-0.15px;">Unit</div><div style="position:absolute;left:1224px;top:705.5px;width:216px;height:59.0px;overflow:hidden"><div style="position:absolute;left:-1224px;top:-705.5px;width:1445px;height:778px"><div style="position:absolute;left:1224px;top:705.5px;width:201.79999999999995px;height:59.0px;background:#fff"></div><div style="position:absolute;left:1227px;top:705.5px;width:198.79999999999995px;height:12.75px;background:#fde4dc"></div><div style="position:absolute;left:1224px;top:717.25px;width:201.79999999999995px;height:1px;background:#e4dcd6"></div><div style="position:absolute;left:1228.5px;top:706.575px;height:12px;line-height:12px;font-size:8.6px;color:#000;font-weight:normal;white-space:pre;letter-spacing:-0.15px;">Board temperature</div><div style="position:absolute;left:1318.2px;top:706.575px;height:12px;line-height:12px;font-size:8.6px;color:#000;font-weight:normal;white-space:pre;letter-spacing:-0.15px;">32,153</div><div style="position:absolute;left:1393.1px;top:706.575px;height:12px;line-height:12px;font-size:8.6px;color:#000;font-weight:normal;white-space:pre;letter-spacing:-0.15px;">&#176;C</div><div style="position:absolute;left:1227px;top:718.25px;width:198.79999999999995px;height:12.75px;background:#fde4dc"></div><div style="position:absolute;left:1224px;top:730.0px;width:201.79999999999995px;height:1px;background:#e4dcd6"></div><div style="position:absolute;left:1228.5px;top:719.325px;height:12px;line-height:12px;font-size:8.6px;color:#000;font-weight:normal;white-space:pre;letter-spacing:-0.15px;">Battery voltage</div><div style="position:absolute;left:1318.2px;top:719.325px;height:12px;line-height:12px;font-size:8.6px;color:#000;font-weight:normal;white-space:pre;letter-spacing:-0.15px;">11,9723</div><div style="position:absolute;left:1393.1px;top:719.325px;height:12px;line-height:12px;font-size:8.6px;color:#000;font-weight:normal;white-space:pre;letter-spacing:-0.15px;">V</div><div style="position:absolute;left:1227px;top:731.0px;width:198.79999999999995px;height:12.75px;background:#fde4dc"></div><div style="position:absolute;left:1224px;top:742.75px;width:201.79999999999995px;height:1px;background:#e4dcd6"></div><div style="position:absolute;left:1228.5px;top:732.075px;height:12px;line-height:12px;font-size:8.6px;color:#000;font-weight:normal;white-space:pre;letter-spacing:-0.15px;">5V output</div><div style="position:absolute;left:1318.2px;top:732.075px;height:12px;line-height:12px;font-size:8.6px;color:#000;font-weight:normal;white-space:pre;letter-spacing:-0.15px;">4,933</div><div style="position:absolute;left:1393.1px;top:732.075px;height:12px;line-height:12px;font-size:8.6px;color:#000;font-weight:normal;white-space:pre;letter-spacing:-0.15px;">V</div><div style="position:absolute;left:1227px;top:743.75px;width:198.79999999999995px;height:12.75px;background:#fde4dc"></div><div style="position:absolute;left:1224px;top:755.5px;width:201.79999999999995px;height:1px;background:#e4dcd6"></div><div style="position:absolute;left:1228.5px;top:744.825px;height:12px;line-height:12px;font-size:8.6px;color:#000;font-weight:normal;white-space:pre;letter-spacing:-0.15px;">Led driver voltage</div><div style="position:absolute;left:1318.2px;top:744.825px;height:12px;line-height:12px;font-size:8.6px;color:#000;font-weight:normal;white-space:pre;letter-spacing:-0.15px;">3,842</div><div style="position:absolute;left:1393.1px;top:744.825px;height:12px;line-height:12px;font-size:8.6px;color:#000;font-weight:normal;white-space:pre;letter-spacing:-0.15px;">V</div><div style="position:absolute;left:1227px;top:756.5px;width:198.79999999999995px;height:12.75px;background:#fde4dc"></div><div style="position:absolute;left:1224px;top:768.25px;width:201.79999999999995px;height:1px;background:#e4dcd6"></div><div style="position:absolute;left:1228.5px;top:757.575px;height:12px;line-height:12px;font-size:8.6px;color:#000;font-weight:normal;white-space:pre;letter-spacing:-0.15px;">Light sensor</div><div style="position:absolute;left:1318.2px;top:757.575px;height:12px;line-height:12px;font-size:8.6px;color:#000;font-weight:normal;white-space:pre;letter-spacing:-0.15px;">60</div><div style="position:absolute;left:1393.1px;top:757.575px;height:12px;line-height:12px;font-size:8.6px;color:#000;font-weight:normal;white-space:pre;letter-spacing:-0.15px;">lx</div><div style="position:absolute;left:1313.7px;top:705.5px;width:1px;height:59.0px;background:#e4dcd6"></div><div style="position:absolute;left:1388.6px;top:705.5px;width:1px;height:59.0px;background:#e4dcd6"></div></div></div>
<div style="position:absolute;left:1425.8px;top:693.5px;width:13.7px;height:71px;background:#ece9e6"></div>
<div style="position:absolute;left:1426.5px;top:693.5px;width:12.5px;height:12px;box-sizing:border-box;background:#d4d0c8;border-top:1px solid #fff;border-left:1px solid #fff;border-right:1px solid #404040;border-bottom:1px solid #404040;box-shadow:inset -1px -1px 0 #808080;"></div>
<svg style="left:1430px;top:697.5px" width="6" height="4"><path d="M3 0L6 4H0z" fill="#000"/></svg>
<div style="position:absolute;left:1426.5px;top:706px;width:12.5px;height:12px;box-sizing:border-box;background:#d4d0c8;border-top:1px solid #fff;border-left:1px solid #fff;border-right:1px solid #404040;border-bottom:1px solid #404040;box-shadow:inset -1px -1px 0 #808080;"></div>
<div style="position:absolute;left:1426.5px;top:752px;width:12.5px;height:12px;box-sizing:border-box;background:#d4d0c8;border-top:1px solid #fff;border-left:1px solid #fff;border-right:1px solid #404040;border-bottom:1px solid #404040;box-shadow:inset -1px -1px 0 #808080;"></div>
<svg style="left:1430px;top:756px" width="6" height="4"><path d="M0 0H6L3 4z" fill="#000"/></svg>
<div style="position:absolute;left:0px;top:764px;width:1445px;height:1.5px;background:#e8e6e0"></div>
<div style="position:absolute;left:1px;top:765.8px;width:64.7px;height:12.2px;background:#1ef01e"></div>
<div style="position:absolute;left:1.02px;top:765.50px;height:14px;line-height:14px;font-size:10.15px;color:#002800;font-weight:bold;white-space:pre;transform:scaleX(0.752);transform-origin:0 50%;">CONNECTED</div>
<div style="position:absolute;left:68.4px;top:765.8px;width:65.6px;height:12.2px;background:#fff"></div>
<div style="position:absolute;left:69.39px;top:765.50px;height:14px;line-height:14px;font-size:10.15px;color:#000;font-weight:bold;white-space:pre;transform:scaleX(0.804);transform-origin:0 50%;">USBtoCAN</div>
<div style="position:absolute;left:136.4px;top:765.8px;width:113.6px;height:12.2px;background:#000"></div>
<div style="position:absolute;left:137.41px;top:765.50px;height:14px;line-height:14px;font-size:10.15px;color:#fff;font-weight:bold;white-space:pre;transform:scaleX(0.776);transform-origin:0 50%;">CAN1: OK</div>
<div style="position:absolute;left:252.8px;top:765.8px;width:112.69999999999999px;height:12.2px;background:#000"></div>
<div style="position:absolute;left:253.20px;top:765.50px;height:14px;line-height:14px;font-size:10.15px;color:#fff;font-weight:bold;white-space:pre;transform:scaleX(0.778);transform-origin:0 50%;">CAN2: OK</div>
<div style="position:absolute;left:368.7px;top:765.8px;width:120.80000000000001px;height:12.2px;background:#000"></div>
<div style="position:absolute;left:369.58px;top:765.50px;height:14px;line-height:14px;font-size:10.15px;color:#4a8ee8;font-weight:bold;white-space:pre;transform:scaleX(0.834);transform-origin:0 50%;">USB: Disconnected</div>
<div style="position:absolute;left:492px;top:765.8px;width:113.39999999999998px;height:12.2px;background:#000"></div>
<div style="position:absolute;left:493.60px;top:765.50px;height:14px;line-height:14px;font-size:10.15px;color:#7c7c7c;font-weight:bold;white-space:pre;transform:scaleX(0.794);transform-origin:0 50%;">GRADE: -</div>
<div style="position:absolute;left:609px;top:765.8px;width:42.5px;height:12.2px;background:#000"></div>
<div style="position:absolute;left:609.36px;top:765.50px;height:14px;line-height:14px;font-size:10.15px;color:#fff;font-weight:bold;white-space:pre;transform:scaleX(1.062);transform-origin:0 50%;">T:</div>
<div style="position:absolute;left:627.32px;top:765.50px;height:14px;line-height:14px;font-size:10.15px;color:#fff;font-weight:bold;white-space:pre;transform:scaleX(0.947);transform-origin:0 50%;">32 &#176;C</div>
<div style="position:absolute;left:654px;top:765.8px;width:15px;height:12.2px;background:#3c3c3c"></div>
<div style="position:absolute;left:654.79px;top:765.50px;height:14px;line-height:14px;font-size:10.15px;color:#8c8c8c;font-weight:normal;white-space:pre;transform:scaleX(0.807);transform-origin:0 50%;">SL</div>
<div style="position:absolute;left:671.4px;top:765.8px;width:44.60000000000002px;height:12.2px;background:#d8d8d8"></div>
<div style="position:absolute;left:672.26px;top:765.50px;height:14px;line-height:14px;font-size:10.15px;color:#000;font-weight:bold;white-space:pre;transform:scaleX(0.858);transform-origin:0 50%;">FW: 50.0</div>
<div style="position:absolute;left:719px;top:765.8px;width:14.700000000000045px;height:12.2px;background:#d4d0c8"></div>
<div style="position:absolute;left:720.66px;top:765.50px;height:14px;line-height:14px;font-size:10.15px;color:#000;font-weight:bold;white-space:pre;transform:scaleX(1.059);transform-origin:0 50%;">5"</div>
<div style="position:absolute;left:735.4px;top:765.8px;width:242.39999999999998px;height:12.2px;background:#d8d8d8"></div>
<div style="position:absolute;left:736.95px;top:765.50px;height:14px;line-height:14px;font-size:10.15px;color:#000;font-weight:bold;white-space:pre;transform:scaleX(0.888);transform-origin:0 50%;">Functions: 1/40, Numbers: 0/40, Operations: 1/80</div>
<div style="position:absolute;left:980.3px;top:765.8px;width:65.70000000000005px;height:12.2px;background:#d4d0c8"></div>
<div style="position:absolute;left:981.19px;top:765.50px;height:14px;line-height:14px;font-size:10.15px;color:#000;font-weight:bold;white-space:pre;transform:scaleX(0.815);transform-origin:0 50%;">TABLES: 2048 B</div>
<div style="position:absolute;left:1047.6px;top:765.8px;width:62.40000000000009px;height:12.2px;background:#d4d0c8"></div>
<div style="position:absolute;left:1048.38px;top:765.50px;height:14px;line-height:14px;font-size:10.15px;color:#000;font-weight:bold;white-space:pre;transform:scaleX(0.837);transform-origin:0 50%;">NAMES: 3484</div>
<div style="position:absolute;left:718px;top:766px;width:1px;height:12px;background:#a8a8a8"></div>
<div style="position:absolute;left:734.5px;top:766px;width:1px;height:12px;background:#a8a8a8"></div>
<div style="position:absolute;left:979px;top:766px;width:1px;height:12px;background:#a8a8a8"></div>
<div style="position:absolute;left:1046.8px;top:766px;width:1px;height:12px;background:#a8a8a8"></div>
<div style="position:absolute;left:1111px;top:766px;width:1px;height:12px;background:#a8a8a8"></div>
</body></html>
